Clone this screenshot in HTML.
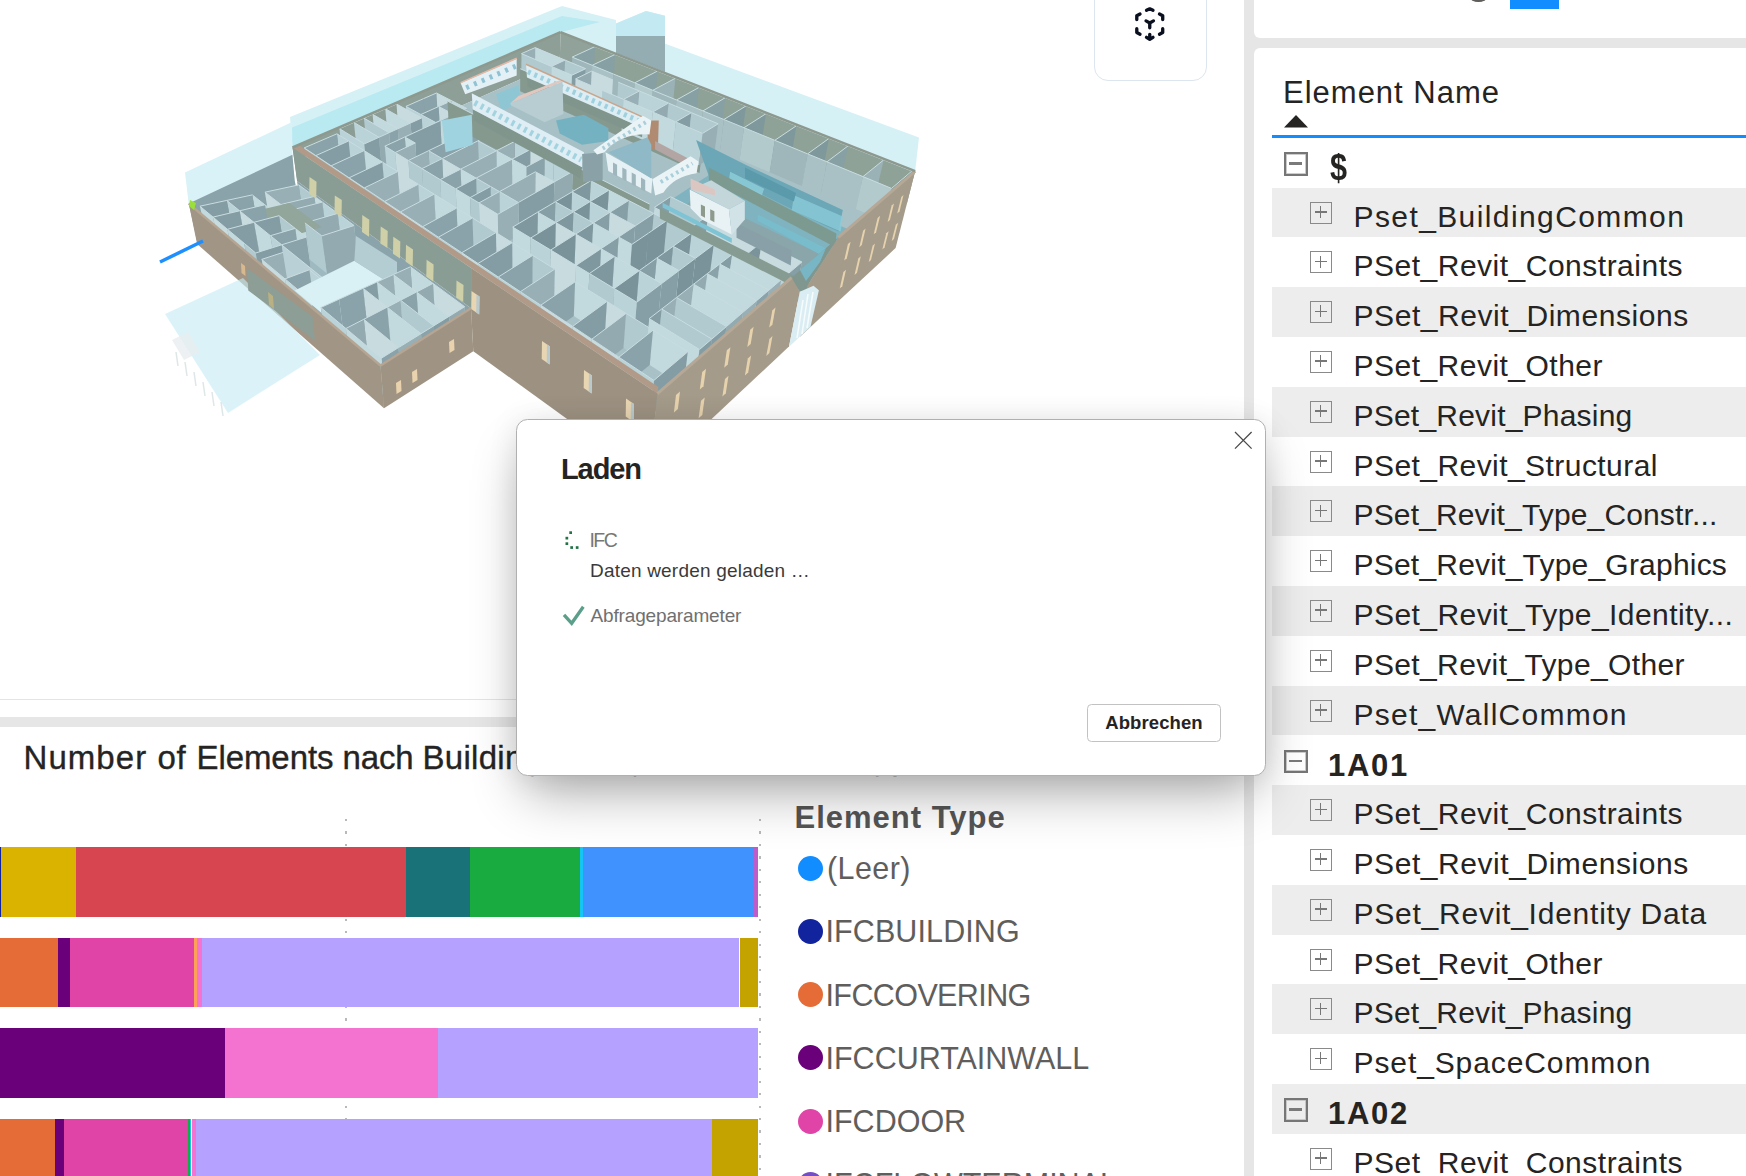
<!DOCTYPE html>
<html lang="de">
<head>
<meta charset="utf-8">
<title>IFC Report</title>
<style>
*{box-sizing:border-box;margin:0;padding:0}
html,body{width:1746px;height:1176px;overflow:hidden;background:#e6e6e6;font-family:"Liberation Sans",sans-serif}
.abs{position:absolute}
#viewer{left:0;top:0;width:1243.6px;height:717px;background:#fff;overflow:hidden}
#viewline{left:0;top:698.8px;width:1243.6px;height:1.4px;background:#dde6f0}
#iconbox{left:1094px;top:-14px;width:113px;height:95px;border:1.8px solid #dde5ee;border-radius:14px;background:#fff}
#chart{left:0;top:727.300px;width:1243.6px;height:449px;background:#fff;overflow:hidden}
#ctitle{left:23.500px;top:12px;font-size:33px;color:#252423;white-space:nowrap;letter-spacing:.77px;-webkit-text-stroke:.35px #252423}
.bar{position:absolute;left:0;height:69.4px}
.bar i{position:absolute;top:0;height:100%}
.grid{position:absolute;top:91.400px;width:2.2px;height:380px;background:repeating-linear-gradient(to bottom,#b9b9b9 0,#b9b9b9 2.2px,transparent 2.2px,transparent 12.46px)}
#legtitle{left:794.5px;top:72.500px;font-size:31px;font-weight:bold;color:#555;white-space:nowrap;letter-spacing:1px}
.leg{position:absolute;left:798px;height:24px;white-space:nowrap;font-size:30.5px;color:#605e5c;line-height:24px}
.leg b{position:absolute;left:0;top:-.5px;width:25px;height:25px;border-radius:50%}
.leg span{position:absolute;left:27.5px;top:0}
#rtop{left:1254px;top:-10px;width:500px;height:48px;background:#fff;border-radius:6px}
#rpanel{left:1254px;top:48px;width:500px;height:1140px;background:#fff;border-radius:6px;overflow:hidden}
#rhead{left:29px;top:27px;font-size:31px;color:#252423;white-space:nowrap;letter-spacing:1px}
#rline{left:18px;top:87px;width:490px;height:2.5px;background:#118dff}
.row{position:absolute;left:18px;width:490px;height:49.9px;white-space:nowrap;font-size:30px;color:#252423}
.row.g{background:#ededed}
.row .t{position:absolute;left:81.5px;top:11px;line-height:36px}
.row.h .t{left:56px;font-weight:bold;font-size:31px;letter-spacing:1.7px;top:12.5px}
.pm{position:absolute;left:38px;top:14px;width:22px;height:22px;border:1.5px solid #8a8a8a}
.pm:before{content:"";position:absolute;left:3.5px;top:8.6px;width:12px;height:1.6px;background:#777}
.pm:after{content:"";position:absolute;left:8.7px;top:3.4px;width:1.6px;height:12px;background:#777}
.row.h .pm{left:12px;top:14.5px;width:23.5px;height:23.5px;border:2.2px solid #767676;box-shadow:inset 0 0 0 .8px #bdbdbd}
.row.h .pm:before{left:3px;top:7.800px;width:13px;height:2.8px;background:#7a7a7a}
.row.h .pm:after{display:none}
#dlg{left:516px;top:419px;width:750px;height:356.5px;background:#fff;border:1.2px solid #b0b0b0;border-radius:11.5px;box-shadow:0 26px 54px -10px rgba(0,0,0,.33),0 2px 30px rgba(0,0,0,.09)}
#dlg .ti{left:44px;top:33px;font-size:29px;font-weight:bold;color:#252423;letter-spacing:-1.1px}
#dlg .l1{left:72.500px;top:109px;font-size:19.5px;color:#777;letter-spacing:-1.6px}
#dlg .l2{left:73px;top:140px;font-size:19px;color:#3b3a39;letter-spacing:.2px}
#dlg .l3{left:73.500px;top:185px;font-size:19px;color:#707070;letter-spacing:-.15px}
#btn{left:570px;top:284px;width:134px;height:38px;border:1.2px solid #c2c2c2;border-radius:4.5px;font-size:18.500px;font-weight:bold;color:#252423;text-align:center;line-height:35px;letter-spacing:.1px}
</style>
</head>
<body>
<div id="viewer" class="abs">
<svg class="abs" style="left:0;top:0;filter:blur(0.6px)" width="1244" height="717" viewBox="0 0 1244 717">
<polygon points="290.0,117.0 562.0,6.0 616.0,20.0 616.0,23.6 646.0,11.0 665.0,15.7 664.7,43.5 919.0,137.5 915.2,171.1 560.5,32.2 292.5,147.5" fill="#d6f1f6"/>
<polygon points="291.0,128.0 562.0,16.0 600.0,22.0 560.5,32.2 292.5,147.5" fill="#b9e9f1"/>
<polygon points="616.0,36.0 665.0,36.0 665.0,72.0 616.0,53.0" fill="#93adb3"/>
<polygon points="616.0,23.6 646.0,11.0 665.0,15.7 665.0,36.0 616.0,36.0" fill="#c3eaf2"/>
<polygon points="185.0,172.5 292.0,122.0 292.5,157.0 188.8,204.5" fill="#d8f2f7"/>
<polygon points="188.8,203.6 292.4,154.8 294.8,181.0 302.0,215.2 197.1,241.6" fill="#8aa2a9"/>
<polygon points="297.0,181.0 471.0,308.3 472.4,349.2 302.0,215.2" fill="#8ba3aa"/>
<polygon points="197.1,241.6 302.0,215.2 472.4,349.2 384.7,406.4" fill="#9fb9c0"/>
<polygon points="298.7,184.9 314.4,196.4 319.1,231.5 303.7,219.4" fill="#b0cad0"/>
<line x1="298.7" y1="184.9" x2="314.4" y2="196.4" stroke="#c9dde1" stroke-width="1"/>
<polygon points="314.4,196.4 322.3,202.1 326.9,237.6 319.1,231.5" fill="#c8dce0"/>
<line x1="314.4" y1="196.4" x2="322.3" y2="202.1" stroke="#c9dde1" stroke-width="1"/>
<polygon points="264.9,192.2 298.7,184.9 303.7,219.4 270.8,228.0" fill="#98afb5"/>
<line x1="264.9" y1="192.2" x2="298.7" y2="184.9" stroke="#c9dde1" stroke-width="1"/>
<polygon points="322.3,202.1 337.7,213.4 342.0,249.6 326.9,237.6" fill="#bad3d8"/>
<line x1="322.3" y1="202.1" x2="337.7" y2="213.4" stroke="#c9dde1" stroke-width="1"/>
<polygon points="280.9,204.5 314.4,196.4 319.1,231.5 286.7,240.8" fill="#92aab0"/>
<line x1="280.9" y1="204.5" x2="314.4" y2="196.4" stroke="#c9dde1" stroke-width="1"/>
<polygon points="337.7,213.4 354.1,225.5 358.2,262.3 342.0,249.6" fill="#bad3d8"/>
<line x1="337.7" y1="213.4" x2="354.1" y2="225.5" stroke="#c9dde1" stroke-width="1"/>
<polygon points="289.0,210.7 322.3,202.1 326.9,237.6 294.6,247.3" fill="#92aab0"/>
<line x1="289.0" y1="210.7" x2="322.3" y2="202.1" stroke="#c9dde1" stroke-width="1"/>
<polygon points="264.9,192.2 280.9,204.5 286.7,240.8 270.8,228.0" fill="#c8dce0"/>
<line x1="264.9" y1="192.2" x2="280.9" y2="204.5" stroke="#c9dde1" stroke-width="1"/>
<polygon points="304.9,222.9 337.7,213.4 342.0,249.6 310.2,260.0" fill="#92aab0"/>
<line x1="304.9" y1="222.9" x2="337.7" y2="213.4" stroke="#c9dde1" stroke-width="1"/>
<polygon points="280.9,204.5 289.0,210.7 294.6,247.3 286.7,240.8" fill="#c8dce0"/>
<line x1="280.9" y1="204.5" x2="289.0" y2="210.7" stroke="#c9dde1" stroke-width="1"/>
<polygon points="252.3,194.9 264.9,204.8 271.1,241.4 258.7,231.2" fill="#c2d9dd"/>
<line x1="252.3" y1="194.9" x2="264.9" y2="204.8" stroke="#c9dde1" stroke-width="1"/>
<polygon points="321.8,235.9 354.1,225.5 358.2,262.3 326.9,273.5" fill="#92aab0"/>
<line x1="321.8" y1="235.9" x2="354.1" y2="225.5" stroke="#c9dde1" stroke-width="1"/>
<polygon points="289.0,210.7 304.9,222.9 310.2,260.0 294.6,247.3" fill="#c2d9dd"/>
<line x1="289.0" y1="210.7" x2="304.9" y2="222.9" stroke="#c9dde1" stroke-width="1"/>
<polygon points="226.8,200.4 252.3,194.9 258.7,231.2 233.9,237.5" fill="#8aa2a9"/>
<line x1="226.8" y1="200.4" x2="252.3" y2="194.9" stroke="#c9dde1" stroke-width="1"/>
<polygon points="264.9,204.8 279.0,215.7 284.9,252.8 271.1,241.4" fill="#bad3d8"/>
<line x1="264.9" y1="204.8" x2="279.0" y2="215.7" stroke="#c9dde1" stroke-width="1"/>
<polygon points="242.2,214.2 275.4,241.1 321.6,227.3 289.5,202.9" fill="#93a69b"/>
<line x1="242.2" y1="214.2" x2="275.4" y2="241.1" stroke="#c9dde1" stroke-width="1"/>
<polygon points="304.9,222.9 321.8,235.9 326.9,273.5 310.2,260.0" fill="#b0cad0"/>
<line x1="304.9" y1="222.9" x2="321.8" y2="235.9" stroke="#c9dde1" stroke-width="1"/>
<polygon points="239.6,210.8 264.9,204.8 271.1,241.4 246.5,248.2" fill="#8aa2a9"/>
<line x1="239.6" y1="210.8" x2="264.9" y2="204.8" stroke="#c9dde1" stroke-width="1"/>
<polygon points="279.0,215.7 295.2,228.4 300.9,265.9 284.9,252.8" fill="#b0cad0"/>
<line x1="279.0" y1="215.7" x2="295.2" y2="228.4" stroke="#c9dde1" stroke-width="1"/>
<polygon points="226.8,200.4 239.6,210.8 246.5,248.2 233.9,237.5" fill="#bad3d8"/>
<line x1="226.8" y1="200.4" x2="239.6" y2="210.8" stroke="#c9dde1" stroke-width="1"/>
<polygon points="253.9,222.3 279.0,215.7 284.9,252.8 260.6,260.1" fill="#849da4"/>
<line x1="253.9" y1="222.3" x2="279.0" y2="215.7" stroke="#c9dde1" stroke-width="1"/>
<polygon points="295.2,228.4 306.3,237.1 311.8,274.9 300.9,265.9" fill="#c2d9dd"/>
<line x1="295.2" y1="228.4" x2="306.3" y2="237.1" stroke="#c9dde1" stroke-width="1"/>
<polygon points="199.9,206.2 226.8,200.4 233.9,237.5 208.0,244.1" fill="#849da4"/>
<line x1="199.9" y1="206.2" x2="226.8" y2="200.4" stroke="#c9dde1" stroke-width="1"/>
<polygon points="239.6,210.8 253.9,222.3 260.6,260.1 246.5,248.2" fill="#c8dce0"/>
<line x1="239.6" y1="210.8" x2="253.9" y2="222.3" stroke="#c9dde1" stroke-width="1"/>
<polygon points="270.4,235.7 295.2,228.4 300.9,265.9 276.8,273.8" fill="#8aa2a9"/>
<line x1="270.4" y1="235.7" x2="295.2" y2="228.4" stroke="#c9dde1" stroke-width="1"/>
<polygon points="213.0,217.1 239.6,210.8 246.5,248.2 220.8,255.3" fill="#849da4"/>
<line x1="213.0" y1="217.1" x2="239.6" y2="210.8" stroke="#c9dde1" stroke-width="1"/>
<polygon points="281.7,244.8 306.3,237.1 311.8,274.9 287.9,283.2" fill="#8aa2a9"/>
<line x1="281.7" y1="244.8" x2="306.3" y2="237.1" stroke="#c9dde1" stroke-width="1"/>
<polygon points="253.9,222.3 270.4,235.7 276.8,273.8 260.6,260.1" fill="#c2d9dd"/>
<line x1="253.9" y1="222.3" x2="270.4" y2="235.7" stroke="#c9dde1" stroke-width="1"/>
<polygon points="199.9,206.2 213.0,217.1 220.8,255.3 208.0,244.1" fill="#c2d9dd"/>
<line x1="199.9" y1="206.2" x2="213.0" y2="217.1" stroke="#c9dde1" stroke-width="1"/>
<polygon points="227.4,229.3 253.9,222.3 260.6,260.1 235.0,267.7" fill="#849da4"/>
<line x1="227.4" y1="229.3" x2="253.9" y2="222.3" stroke="#c9dde1" stroke-width="1"/>
<polygon points="270.4,235.7 281.7,244.8 287.9,283.2 276.8,273.8" fill="#bad3d8"/>
<line x1="270.4" y1="235.7" x2="281.7" y2="244.8" stroke="#c9dde1" stroke-width="1"/>
<polygon points="213.0,217.1 227.4,229.3 235.0,267.7 220.8,255.3" fill="#c8dce0"/>
<line x1="213.0" y1="217.1" x2="227.4" y2="229.3" stroke="#c9dde1" stroke-width="1"/>
<polygon points="227.4,229.3 244.2,243.3 251.4,282.0 235.0,267.7" fill="#c2d9dd"/>
<line x1="227.4" y1="229.3" x2="244.2" y2="243.3" stroke="#c9dde1" stroke-width="1"/>
<polygon points="255.7,253.0 281.7,244.8 287.9,283.2 262.7,291.9" fill="#849da4"/>
<line x1="255.7" y1="253.0" x2="281.7" y2="244.8" stroke="#c9dde1" stroke-width="1"/>
<polygon points="286.4,251.3 309.3,269.8 315.0,308.9 292.6,289.9" fill="#b0cad0"/>
<line x1="286.4" y1="251.3" x2="309.3" y2="269.8" stroke="#c9dde1" stroke-width="1"/>
<polygon points="261.7,259.4 286.4,251.3 292.6,289.9 268.7,298.5" fill="#98afb5"/>
<line x1="261.7" y1="259.4" x2="286.4" y2="251.3" stroke="#c9dde1" stroke-width="1"/>
<polygon points="281.6,244.8 345.4,296.3 350.2,336.0 287.8,283.2" fill="#b9d1d6"/>
<line x1="281.6" y1="244.8" x2="345.4" y2="296.3" stroke="#c9dde1" stroke-width="1"/>
<polygon points="244.2,243.3 255.7,253.0 262.7,291.9 251.4,282.0" fill="#b0cad0"/>
<line x1="244.2" y1="243.3" x2="255.7" y2="253.0" stroke="#c9dde1" stroke-width="1"/>
<polygon points="309.3,269.8 335.3,290.9 340.4,330.4 315.0,308.9" fill="#bad3d8"/>
<line x1="309.3" y1="269.8" x2="335.3" y2="290.9" stroke="#c9dde1" stroke-width="1"/>
<polygon points="285.0,278.9 309.3,269.8 315.0,308.9 291.5,318.4" fill="#8aa2a9"/>
<line x1="285.0" y1="278.9" x2="309.3" y2="269.8" stroke="#c9dde1" stroke-width="1"/>
<polygon points="261.7,259.4 285.0,278.9 291.5,318.4 268.7,298.5" fill="#c8dce0"/>
<line x1="261.7" y1="259.4" x2="285.0" y2="278.9" stroke="#c9dde1" stroke-width="1"/>
<polygon points="311.6,301.2 335.3,290.9 340.4,330.4 317.4,341.0" fill="#92aab0"/>
<line x1="311.6" y1="301.2" x2="335.3" y2="290.9" stroke="#c9dde1" stroke-width="1"/>
<polygon points="285.0,278.9 311.6,301.2 317.4,341.0 291.5,318.4" fill="#c2d9dd"/>
<line x1="285.0" y1="278.9" x2="311.6" y2="301.2" stroke="#c9dde1" stroke-width="1"/>
<polygon points="294.8,290.5 354.3,260.7 397.0,288.0 340.0,328.6" fill="#d9f1f5"/>
<polygon points="354.3,260.7 397.0,288.0 397.0,262.0 356.0,236.0" fill="#b4cdd3"/>
<polygon points="410.4,266.8 433.0,283.4 435.4,323.1 413.3,305.7" fill="#c2d9dd"/>
<line x1="410.4" y1="266.8" x2="433.0" y2="283.4" stroke="#c9dde1" stroke-width="1"/>
<polygon points="393.3,274.6 410.4,266.8 413.3,305.7 396.7,313.7" fill="#98afb5"/>
<line x1="393.3" y1="274.6" x2="410.4" y2="266.8" stroke="#c9dde1" stroke-width="1"/>
<polygon points="433.0,283.4 464.7,306.7 466.3,347.4 435.4,323.1" fill="#c8dce0"/>
<line x1="433.0" y1="283.4" x2="464.7" y2="306.7" stroke="#c9dde1" stroke-width="1"/>
<polygon points="416.5,292.0 433.0,283.4 435.4,323.1 419.4,331.8" fill="#92aab0"/>
<line x1="416.5" y1="292.0" x2="433.0" y2="283.4" stroke="#c9dde1" stroke-width="1"/>
<polygon points="393.3,274.6 416.5,292.0 419.4,331.8 396.7,313.7" fill="#c2d9dd"/>
<line x1="393.3" y1="274.6" x2="416.5" y2="292.0" stroke="#c9dde1" stroke-width="1"/>
<polygon points="376.9,282.0 393.3,274.6 396.7,313.7 380.9,321.3" fill="#98afb5"/>
<line x1="376.9" y1="282.0" x2="393.3" y2="274.6" stroke="#c9dde1" stroke-width="1"/>
<polygon points="449.0,316.4 464.7,306.7 466.3,347.4 451.0,357.2" fill="#92aab0"/>
<line x1="449.0" y1="316.4" x2="464.7" y2="306.7" stroke="#c9dde1" stroke-width="1"/>
<polygon points="416.5,292.0 449.0,316.4 451.0,357.2 419.4,331.8" fill="#c2d9dd"/>
<line x1="416.5" y1="292.0" x2="449.0" y2="316.4" stroke="#c9dde1" stroke-width="1"/>
<polygon points="400.6,300.2 416.5,292.0 419.4,331.8 403.9,340.2" fill="#8aa2a9"/>
<line x1="400.6" y1="300.2" x2="416.5" y2="292.0" stroke="#c9dde1" stroke-width="1"/>
<polygon points="376.9,282.0 400.6,300.2 403.9,340.2 380.9,321.3" fill="#c2d9dd"/>
<line x1="376.9" y1="282.0" x2="400.6" y2="300.2" stroke="#c9dde1" stroke-width="1"/>
<polygon points="363.1,288.3 376.9,282.0 380.9,321.3 367.5,327.7" fill="#849da4"/>
<line x1="363.1" y1="288.3" x2="376.9" y2="282.0" stroke="#c9dde1" stroke-width="1"/>
<polygon points="433.8,325.8 449.0,316.4 451.0,357.2 436.3,366.6" fill="#849da4"/>
<line x1="433.8" y1="325.8" x2="449.0" y2="316.4" stroke="#c9dde1" stroke-width="1"/>
<polygon points="387.2,307.2 400.6,300.2 403.9,340.2 390.9,347.2" fill="#98afb5"/>
<line x1="387.2" y1="307.2" x2="400.6" y2="300.2" stroke="#c9dde1" stroke-width="1"/>
<polygon points="400.6,300.2 433.8,325.8 436.3,366.6 403.9,340.2" fill="#b0cad0"/>
<line x1="400.6" y1="300.2" x2="433.8" y2="325.8" stroke="#c9dde1" stroke-width="1"/>
<polygon points="363.1,288.3 387.2,307.2 390.9,347.2 367.5,327.7" fill="#c8dce0"/>
<line x1="363.1" y1="288.3" x2="387.2" y2="307.2" stroke="#c9dde1" stroke-width="1"/>
<polygon points="339.1,299.2 363.1,288.3 367.5,327.7 344.2,338.9" fill="#8aa2a9"/>
<line x1="339.1" y1="299.2" x2="363.1" y2="288.3" stroke="#c9dde1" stroke-width="1"/>
<polygon points="387.2,307.2 421.0,333.7 423.9,374.5 390.9,347.2" fill="#c2d9dd"/>
<line x1="387.2" y1="307.2" x2="421.0" y2="333.7" stroke="#c9dde1" stroke-width="1"/>
<polygon points="421.0,333.7 433.8,325.8 436.3,366.6 423.9,374.5" fill="#8aa2a9"/>
<line x1="421.0" y1="333.7" x2="433.8" y2="325.8" stroke="#c9dde1" stroke-width="1"/>
<polygon points="363.8,319.3 387.2,307.2 390.9,347.2 368.2,359.5" fill="#8aa2a9"/>
<line x1="363.8" y1="319.3" x2="387.2" y2="307.2" stroke="#c9dde1" stroke-width="1"/>
<polygon points="320.8,307.5 339.1,299.2 344.2,338.9 326.5,347.4" fill="#8aa2a9"/>
<line x1="320.8" y1="307.5" x2="339.1" y2="299.2" stroke="#c9dde1" stroke-width="1"/>
<polygon points="398.5,347.6 421.0,333.7 423.9,374.5 402.1,388.4" fill="#98afb5"/>
<line x1="398.5" y1="347.6" x2="421.0" y2="333.7" stroke="#c9dde1" stroke-width="1"/>
<polygon points="363.8,319.3 398.5,347.6 402.1,388.4 368.2,359.5" fill="#c8dce0"/>
<line x1="363.8" y1="319.3" x2="398.5" y2="347.6" stroke="#c9dde1" stroke-width="1"/>
<polygon points="345.9,328.5 363.8,319.3 368.2,359.5 351.0,368.8" fill="#92aab0"/>
<line x1="345.9" y1="328.5" x2="363.8" y2="319.3" stroke="#c9dde1" stroke-width="1"/>
<polygon points="320.8,307.5 345.9,328.5 351.0,368.8 326.5,347.4" fill="#bad3d8"/>
<line x1="320.8" y1="307.5" x2="345.9" y2="328.5" stroke="#c9dde1" stroke-width="1"/>
<polygon points="381.4,358.2 398.5,347.6 402.1,388.4 385.6,399.0" fill="#8aa2a9"/>
<line x1="381.4" y1="358.2" x2="398.5" y2="347.6" stroke="#c9dde1" stroke-width="1"/>
<polygon points="345.9,328.5 381.4,358.2 385.6,399.0 351.0,368.8" fill="#c2d9dd"/>
<line x1="345.9" y1="328.5" x2="381.4" y2="358.2" stroke="#c9dde1" stroke-width="1"/>
<polygon points="292.5,147.5 560.5,32.2 559.8,61.6 297.1,179.4" fill="#8e9f97"/>
<polygon points="560.5,32.2 915.2,171.1 906.9,203.4 559.8,61.6" fill="#90a299"/>
<polygon points="297.1,179.4 559.8,61.6 906.9,203.4 653.7,429.1" fill="#a8c1c7"/>
<polygon points="595.0,46.6 615.0,54.5 613.3,84.5 593.7,76.4" fill="#8ea298"/>
<line x1="595.0" y1="46.6" x2="615.0" y2="54.5" stroke="#c9dde1" stroke-width="1"/>
<polygon points="572.2,57.1 595.0,46.6 593.7,76.4 571.3,87.2" fill="#86a0a4"/>
<line x1="572.2" y1="57.1" x2="595.0" y2="46.6" stroke="#c9dde1" stroke-width="1"/>
<polygon points="521.5,53.6 535.2,47.6 534.9,77.4 521.4,83.5" fill="#98afb5"/>
<line x1="521.5" y1="53.6" x2="535.2" y2="47.6" stroke="#c9dde1" stroke-width="1"/>
<polygon points="535.2,47.6 565.1,60.1 564.3,90.2 534.9,77.4" fill="#c2d9dd"/>
<line x1="535.2" y1="47.6" x2="565.1" y2="60.1" stroke="#c9dde1" stroke-width="1"/>
<polygon points="459.1,122.0 651.6,221.5 712.3,181.2 520.6,93.6" fill="#a6c0c6"/>
<line x1="459.1" y1="122.0" x2="651.6" y2="221.5" stroke="#c9dde1" stroke-width="1"/>
<polygon points="615.0,54.5 636.0,62.7 633.9,92.9 613.3,84.5" fill="#8ea298"/>
<line x1="615.0" y1="54.5" x2="636.0" y2="62.7" stroke="#c9dde1" stroke-width="1"/>
<polygon points="592.2,65.3 615.0,54.5 613.3,84.5 590.9,95.6" fill="#86a0a4"/>
<line x1="592.2" y1="65.3" x2="615.0" y2="54.5" stroke="#c9dde1" stroke-width="1"/>
<polygon points="521.5,53.6 551.4,66.4 550.8,96.7 521.4,83.5" fill="#b0cad0"/>
<line x1="521.5" y1="53.6" x2="551.4" y2="66.4" stroke="#c9dde1" stroke-width="1"/>
<polygon points="572.2,57.1 592.2,65.3 590.9,95.6 571.3,87.2" fill="#9fb7ba"/>
<line x1="572.2" y1="57.1" x2="592.2" y2="65.3" stroke="#c9dde1" stroke-width="1"/>
<polygon points="551.4,66.4 565.1,60.1 564.3,90.2 550.8,96.7" fill="#92aab0"/>
<line x1="551.4" y1="66.4" x2="565.1" y2="60.1" stroke="#c9dde1" stroke-width="1"/>
<polygon points="565.1,60.1 585.7,68.7 584.5,99.0 564.3,90.2" fill="#b0cad0"/>
<line x1="565.1" y1="60.1" x2="585.7" y2="68.7" stroke="#c9dde1" stroke-width="1"/>
<polygon points="636.0,62.7 657.4,71.1 654.9,101.5 633.9,92.9" fill="#8ea298"/>
<line x1="636.0" y1="62.7" x2="657.4" y2="71.1" stroke="#c9dde1" stroke-width="1"/>
<polygon points="592.2,65.3 613.3,74.0 611.5,104.5 590.9,95.6" fill="#a9c1c4"/>
<line x1="592.2" y1="65.3" x2="613.3" y2="74.0" stroke="#c9dde1" stroke-width="1"/>
<polygon points="551.4,66.4 572.0,75.2 571.1,105.7 550.8,96.7" fill="#c2d9dd"/>
<line x1="551.4" y1="66.4" x2="572.0" y2="75.2" stroke="#c9dde1" stroke-width="1"/>
<polygon points="572.0,75.2 585.7,68.7 584.5,99.0 571.1,105.7" fill="#849da4"/>
<line x1="572.0" y1="75.2" x2="585.7" y2="68.7" stroke="#c9dde1" stroke-width="1"/>
<polygon points="657.4,71.1 675.4,78.2 672.5,108.8 654.9,101.5" fill="#8ea298"/>
<line x1="657.4" y1="71.1" x2="675.4" y2="78.2" stroke="#c9dde1" stroke-width="1"/>
<polygon points="575.6,78.9 591.7,71.1 590.3,101.5 574.6,109.5" fill="#92aab0"/>
<line x1="575.6" y1="78.9" x2="591.7" y2="71.1" stroke="#c9dde1" stroke-width="1"/>
<polygon points="634.8,82.8 657.4,71.1 654.9,101.5 632.6,113.5" fill="#86a0a4"/>
<line x1="634.8" y1="82.8" x2="657.4" y2="71.1" stroke="#c9dde1" stroke-width="1"/>
<polygon points="591.7,71.1 618.3,82.2 616.5,112.9 590.3,101.5" fill="#c8dce0"/>
<line x1="591.7" y1="71.1" x2="618.3" y2="82.2" stroke="#c9dde1" stroke-width="1"/>
<polygon points="613.3,74.0 634.8,82.8 632.6,113.5 611.5,104.5" fill="#9fb7ba"/>
<line x1="613.3" y1="74.0" x2="634.8" y2="82.8" stroke="#c9dde1" stroke-width="1"/>
<polygon points="675.4,78.2 699.0,87.4 695.6,118.2 672.5,108.8" fill="#8ea298"/>
<line x1="675.4" y1="78.2" x2="699.0" y2="87.4" stroke="#c9dde1" stroke-width="1"/>
<polygon points="652.8,90.3 675.4,78.2 672.5,108.8 650.3,121.1" fill="#9ab2b6"/>
<line x1="652.8" y1="90.3" x2="675.4" y2="78.2" stroke="#c9dde1" stroke-width="1"/>
<polygon points="575.6,78.9 602.3,90.3 600.8,121.2 574.6,109.5" fill="#c8dce0"/>
<line x1="575.6" y1="78.9" x2="602.3" y2="90.3" stroke="#c9dde1" stroke-width="1"/>
<polygon points="634.8,82.8 652.8,90.3 650.3,121.1 632.6,113.5" fill="#b3cacd"/>
<line x1="634.8" y1="82.8" x2="652.8" y2="90.3" stroke="#c9dde1" stroke-width="1"/>
<polygon points="618.3,82.2 639.4,91.0 637.2,121.9 616.5,112.9" fill="#b0cad0"/>
<line x1="618.3" y1="82.2" x2="639.4" y2="91.0" stroke="#c9dde1" stroke-width="1"/>
<polygon points="699.0,87.4 725.3,97.7 721.3,128.7 695.6,118.2" fill="#8ea298"/>
<line x1="699.0" y1="87.4" x2="725.3" y2="97.7" stroke="#c9dde1" stroke-width="1"/>
<polygon points="676.5,100.0 699.0,87.4 695.6,118.2 673.5,131.1" fill="#86a0a4"/>
<line x1="676.5" y1="100.0" x2="699.0" y2="87.4" stroke="#c9dde1" stroke-width="1"/>
<polygon points="652.8,90.3 676.5,100.0 673.5,131.1 650.3,121.1" fill="#9fb7ba"/>
<line x1="652.8" y1="90.3" x2="676.5" y2="100.0" stroke="#c9dde1" stroke-width="1"/>
<polygon points="623.5,99.4 639.4,91.0 637.2,121.9 621.5,130.5" fill="#98afb5"/>
<line x1="623.5" y1="99.4" x2="639.4" y2="91.0" stroke="#c9dde1" stroke-width="1"/>
<polygon points="602.3,90.3 623.5,99.4 621.5,130.5 600.8,121.2" fill="#b0cad0"/>
<line x1="602.3" y1="90.3" x2="623.5" y2="99.4" stroke="#c9dde1" stroke-width="1"/>
<polygon points="639.4,91.0 668.5,103.1 665.7,134.3 637.2,121.9" fill="#bad3d8"/>
<line x1="639.4" y1="91.0" x2="668.5" y2="103.1" stroke="#c9dde1" stroke-width="1"/>
<polygon points="725.3,97.7 746.1,105.9 741.7,137.1 721.3,128.7" fill="#8ea298"/>
<line x1="725.3" y1="97.7" x2="746.1" y2="105.9" stroke="#c9dde1" stroke-width="1"/>
<polygon points="520.2,68.7 702.3,148.9 699.5,172.9 520.2,91.3" fill="#85998f"/>
<line x1="520.2" y1="68.7" x2="702.3" y2="148.9" stroke="#c9dde1" stroke-width="1"/>
<polygon points="703.0,110.9 725.3,97.7 721.3,128.7 699.4,142.2" fill="#86a0a4"/>
<line x1="703.0" y1="110.9" x2="725.3" y2="97.7" stroke="#c9dde1" stroke-width="1"/>
<polygon points="423.6,98.6 436.5,93.0 438.1,123.9 425.4,129.6" fill="#8aa2a9"/>
<line x1="423.6" y1="98.6" x2="436.5" y2="93.0" stroke="#c9dde1" stroke-width="1"/>
<polygon points="436.5,93.0 451.6,100.7 452.9,131.8 438.1,123.9" fill="#c8dce0"/>
<line x1="436.5" y1="93.0" x2="451.6" y2="100.7" stroke="#c9dde1" stroke-width="1"/>
<polygon points="676.5,100.0 703.0,110.9 699.4,142.2 673.5,131.1" fill="#a9c1c4"/>
<line x1="676.5" y1="100.0" x2="703.0" y2="110.9" stroke="#c9dde1" stroke-width="1"/>
<polygon points="669.2,201.0 819.4,274.7 863.2,236.0 715.9,170.4" fill="#7fb3bf"/>
<line x1="669.2" y1="201.0" x2="819.4" y2="274.7" stroke="#c9dde1" stroke-width="1"/>
<polygon points="623.5,99.4 652.7,112.0 650.1,143.3 621.5,130.5" fill="#c2d9dd"/>
<line x1="623.5" y1="99.4" x2="652.7" y2="112.0" stroke="#c9dde1" stroke-width="1"/>
<polygon points="746.1,105.9 766.0,113.7 761.2,145.1 741.7,137.1" fill="#8ea298"/>
<line x1="746.1" y1="105.9" x2="766.0" y2="113.7" stroke="#c9dde1" stroke-width="1"/>
<polygon points="668.5,103.1 691.4,112.7 688.1,144.0 665.7,134.3" fill="#b0cad0"/>
<line x1="668.5" y1="103.1" x2="691.4" y2="112.7" stroke="#c9dde1" stroke-width="1"/>
<polygon points="652.7,112.0 668.5,103.1 665.7,134.3 650.1,143.3" fill="#92aab0"/>
<line x1="652.7" y1="112.0" x2="668.5" y2="103.1" stroke="#c9dde1" stroke-width="1"/>
<polygon points="723.9,119.5 746.1,105.9 741.7,137.1 719.9,150.9" fill="#7f989c"/>
<line x1="723.9" y1="119.5" x2="746.1" y2="105.9" stroke="#c9dde1" stroke-width="1"/>
<polygon points="405.9,106.4 423.6,98.6 425.4,129.6 408.1,137.5" fill="#8aa2a9"/>
<line x1="405.9" y1="106.4" x2="423.6" y2="98.6" stroke="#c9dde1" stroke-width="1"/>
<polygon points="438.7,106.5 451.6,100.7 452.9,131.8 440.3,137.7" fill="#92aab0"/>
<line x1="438.7" y1="106.5" x2="451.6" y2="100.7" stroke="#c9dde1" stroke-width="1"/>
<polygon points="451.6,100.7 466.7,108.4 467.7,139.6 452.9,131.8" fill="#c2d9dd"/>
<line x1="451.6" y1="100.7" x2="466.7" y2="108.4" stroke="#c9dde1" stroke-width="1"/>
<polygon points="703.0,110.9 723.9,119.5 719.9,150.9 699.4,142.2" fill="#a9c1c4"/>
<line x1="703.0" y1="110.9" x2="723.9" y2="119.5" stroke="#c9dde1" stroke-width="1"/>
<polygon points="385.3,108.8 396.5,104.0 398.8,135.1 387.9,140.0" fill="#8c9d95"/>
<line x1="385.3" y1="108.8" x2="396.5" y2="104.0" stroke="#c9dde1" stroke-width="1"/>
<polygon points="766.0,113.7 796.5,125.7 791.0,157.2 761.2,145.1" fill="#8ea298"/>
<line x1="766.0" y1="113.7" x2="796.5" y2="125.7" stroke="#c9dde1" stroke-width="1"/>
<polygon points="675.7,121.9 691.4,112.7 688.1,144.0 672.6,153.4" fill="#849da4"/>
<line x1="675.7" y1="121.9" x2="691.4" y2="112.7" stroke="#c9dde1" stroke-width="1"/>
<polygon points="691.4,112.7 718.2,123.8 714.3,155.4 688.1,144.0" fill="#b0cad0"/>
<line x1="691.4" y1="112.7" x2="718.2" y2="123.8" stroke="#c9dde1" stroke-width="1"/>
<polygon points="652.7,112.0 675.7,121.9 672.6,153.4 650.1,143.3" fill="#c2d9dd"/>
<line x1="652.7" y1="112.0" x2="675.7" y2="121.9" stroke="#c9dde1" stroke-width="1"/>
<polygon points="744.0,127.7 766.0,113.7 761.2,145.1 739.6,159.4" fill="#7f989c"/>
<line x1="744.0" y1="127.7" x2="766.0" y2="113.7" stroke="#c9dde1" stroke-width="1"/>
<polygon points="438.7,106.5 453.7,114.4 455.0,145.8 440.3,137.7" fill="#c8dce0"/>
<line x1="438.7" y1="106.5" x2="453.7" y2="114.4" stroke="#c9dde1" stroke-width="1"/>
<polygon points="453.7,114.4 466.7,108.4 467.7,139.6 455.0,145.8" fill="#98afb5"/>
<line x1="453.7" y1="114.4" x2="466.7" y2="108.4" stroke="#c9dde1" stroke-width="1"/>
<polygon points="420.9,114.5 438.7,106.5 440.3,137.7 422.8,145.9" fill="#849da4"/>
<line x1="420.9" y1="114.5" x2="438.7" y2="106.5" stroke="#c9dde1" stroke-width="1"/>
<polygon points="405.9,106.4 420.9,114.5 422.8,145.9 408.1,137.5" fill="#bad3d8"/>
<line x1="405.9" y1="106.4" x2="420.9" y2="114.5" stroke="#c9dde1" stroke-width="1"/>
<polygon points="396.5,104.0 421.8,117.9 423.8,149.3 398.8,135.1" fill="#c8dce0"/>
<line x1="396.5" y1="104.0" x2="421.8" y2="117.9" stroke="#c9dde1" stroke-width="1"/>
<polygon points="723.9,119.5 744.0,127.7 739.6,159.4 719.9,150.9" fill="#a9c1c4"/>
<line x1="723.9" y1="119.5" x2="744.0" y2="127.7" stroke="#c9dde1" stroke-width="1"/>
<polygon points="372.6,114.3 385.3,108.8 387.9,140.0 375.4,145.7" fill="#8c9d95"/>
<line x1="372.6" y1="114.3" x2="385.3" y2="108.8" stroke="#c9dde1" stroke-width="1"/>
<polygon points="458.4,112.2 469.0,117.7 470.0,149.1 459.6,143.5" fill="#b0cad0"/>
<line x1="458.4" y1="112.2" x2="469.0" y2="117.7" stroke="#c9dde1" stroke-width="1"/>
<polygon points="440.3,120.6 458.4,112.2 459.6,143.5 441.9,152.1" fill="#8aa2a9"/>
<line x1="440.3" y1="120.6" x2="458.4" y2="112.2" stroke="#c9dde1" stroke-width="1"/>
<polygon points="385.3,108.8 410.6,123.0 412.8,154.5 387.9,140.0" fill="#c2d9dd"/>
<line x1="385.3" y1="108.8" x2="410.6" y2="123.0" stroke="#c9dde1" stroke-width="1"/>
<polygon points="435.9,122.6 453.7,114.4 455.0,145.8 437.5,154.2" fill="#98afb5"/>
<line x1="435.9" y1="122.6" x2="453.7" y2="114.4" stroke="#c9dde1" stroke-width="1"/>
<polygon points="363.9,118.1 372.6,114.3 375.4,145.7 367.0,149.5" fill="#8c9d95"/>
<line x1="363.9" y1="118.1" x2="372.6" y2="114.3" stroke="#c9dde1" stroke-width="1"/>
<polygon points="420.9,114.5 435.9,122.6 437.5,154.2 422.8,145.9" fill="#bad3d8"/>
<line x1="420.9" y1="114.5" x2="435.9" y2="122.6" stroke="#c9dde1" stroke-width="1"/>
<polygon points="675.7,121.9 702.6,133.4 698.9,165.2 672.6,153.4" fill="#bad3d8"/>
<line x1="675.7" y1="121.9" x2="702.6" y2="133.4" stroke="#c9dde1" stroke-width="1"/>
<polygon points="796.5,125.7 829.0,138.4 822.8,170.2 791.0,157.2" fill="#8ea298"/>
<line x1="796.5" y1="125.7" x2="829.0" y2="138.4" stroke="#c9dde1" stroke-width="1"/>
<polygon points="702.6,133.4 718.2,123.8 714.3,155.4 698.9,165.2" fill="#98afb5"/>
<line x1="702.6" y1="133.4" x2="718.2" y2="123.8" stroke="#c9dde1" stroke-width="1"/>
<polygon points="469.0,117.7 482.5,124.7 483.2,156.3 470.0,149.1" fill="#bad3d8"/>
<line x1="469.0" y1="117.7" x2="482.5" y2="124.7" stroke="#c9dde1" stroke-width="1"/>
<polygon points="668.6,216.5 798.0,282.3 826.8,257.2 698.8,196.0" fill="#8aa6aa"/>
<line x1="668.6" y1="216.5" x2="798.0" y2="282.3" stroke="#c9dde1" stroke-width="1"/>
<polygon points="774.8,140.3 796.5,125.7 791.0,157.2 769.6,172.2" fill="#7f989c"/>
<line x1="774.8" y1="140.3" x2="796.5" y2="125.7" stroke="#c9dde1" stroke-width="1"/>
<polygon points="410.6,123.0 421.8,117.9 423.8,149.3 412.8,154.5" fill="#849da4"/>
<line x1="410.6" y1="123.0" x2="421.8" y2="117.9" stroke="#c9dde1" stroke-width="1"/>
<polygon points="450.9,126.3 469.0,117.7 470.0,149.1 452.2,157.9" fill="#849da4"/>
<line x1="450.9" y1="126.3" x2="469.0" y2="117.7" stroke="#c9dde1" stroke-width="1"/>
<polygon points="744.0,127.7 774.8,140.3 769.6,172.2 739.6,159.4" fill="#b3cacd"/>
<line x1="744.0" y1="127.7" x2="774.8" y2="140.3" stroke="#c9dde1" stroke-width="1"/>
<polygon points="353.9,122.4 363.9,118.1 367.0,149.5 357.2,153.8" fill="#8c9d95"/>
<line x1="353.9" y1="122.4" x2="363.9" y2="118.1" stroke="#c9dde1" stroke-width="1"/>
<polygon points="440.3,120.6 450.9,126.3 452.2,157.9 441.9,152.1" fill="#c2d9dd"/>
<line x1="440.3" y1="120.6" x2="450.9" y2="126.3" stroke="#c9dde1" stroke-width="1"/>
<polygon points="372.6,114.3 397.8,128.8 400.2,160.4 375.4,145.7" fill="#c2d9dd"/>
<line x1="372.6" y1="114.3" x2="397.8" y2="128.8" stroke="#c9dde1" stroke-width="1"/>
<polygon points="482.5,124.7 496.2,131.8 496.7,163.5 483.2,156.3" fill="#b0cad0"/>
<line x1="482.5" y1="124.7" x2="496.2" y2="131.8" stroke="#c9dde1" stroke-width="1"/>
<polygon points="397.8,128.8 410.6,123.0 412.8,154.5 400.2,160.4" fill="#98afb5"/>
<line x1="397.8" y1="128.8" x2="410.6" y2="123.0" stroke="#c9dde1" stroke-width="1"/>
<polygon points="363.9,118.1 389.1,132.7 391.7,164.4 367.0,149.5" fill="#b0cad0"/>
<line x1="363.9" y1="118.1" x2="389.1" y2="132.7" stroke="#c9dde1" stroke-width="1"/>
<polygon points="464.3,133.5 482.5,124.7 483.2,156.3 465.4,165.3" fill="#8aa2a9"/>
<line x1="464.3" y1="133.5" x2="482.5" y2="124.7" stroke="#c9dde1" stroke-width="1"/>
<polygon points="829.0,138.4 848.1,145.9 841.4,177.9 822.8,170.2" fill="#8ea298"/>
<line x1="829.0" y1="138.4" x2="848.1" y2="145.9" stroke="#c9dde1" stroke-width="1"/>
<polygon points="339.4,128.6 353.9,122.4 357.2,153.8 343.0,160.2" fill="#8c9d95"/>
<line x1="339.4" y1="128.6" x2="353.9" y2="122.4" stroke="#c9dde1" stroke-width="1"/>
<polygon points="450.9,126.3 464.3,133.5 465.4,165.3 452.2,157.9" fill="#c8dce0"/>
<line x1="450.9" y1="126.3" x2="464.3" y2="133.5" stroke="#c9dde1" stroke-width="1"/>
<polygon points="404.8,137.0 440.3,120.6 441.9,152.1 407.2,168.8" fill="#849da4"/>
<line x1="404.8" y1="137.0" x2="440.3" y2="120.6" stroke="#c9dde1" stroke-width="1"/>
<polygon points="353.9,122.4 379.0,137.3 381.8,169.1 357.2,153.8" fill="#bad3d8"/>
<line x1="353.9" y1="122.4" x2="379.0" y2="137.3" stroke="#c9dde1" stroke-width="1"/>
<polygon points="389.1,132.7 397.8,128.8 400.2,160.4 391.7,164.4" fill="#8aa2a9"/>
<line x1="389.1" y1="132.7" x2="397.8" y2="128.8" stroke="#c9dde1" stroke-width="1"/>
<polygon points="807.6,153.9 829.0,138.4 822.8,170.2 801.7,186.0" fill="#7f989c"/>
<line x1="807.6" y1="153.9" x2="829.0" y2="138.4" stroke="#c9dde1" stroke-width="1"/>
<polygon points="496.2,131.8 514.7,141.4 514.8,173.3 496.7,163.5" fill="#c8dce0"/>
<line x1="496.2" y1="131.8" x2="514.7" y2="141.4" stroke="#c9dde1" stroke-width="1"/>
<polygon points="774.8,140.3 807.6,153.9 801.7,186.0 769.6,172.2" fill="#9fb7ba"/>
<line x1="774.8" y1="140.3" x2="807.6" y2="153.9" stroke="#c9dde1" stroke-width="1"/>
<polygon points="478.0,140.8 496.2,131.8 496.7,163.5 478.8,172.8" fill="#92aab0"/>
<line x1="478.0" y1="140.8" x2="496.2" y2="131.8" stroke="#c9dde1" stroke-width="1"/>
<polygon points="447.6,101.1 649.7,204.1 647.6,228.8 448.6,124.2" fill="#85998f"/>
<line x1="447.6" y1="101.1" x2="649.7" y2="204.1" stroke="#c9dde1" stroke-width="1"/>
<polygon points="379.0,137.3 389.1,132.7 391.7,164.4 381.8,169.1" fill="#92aab0"/>
<line x1="379.0" y1="137.3" x2="389.1" y2="132.7" stroke="#c9dde1" stroke-width="1"/>
<polygon points="848.1,145.9 883.7,159.9 876.2,192.1 841.4,177.9" fill="#8ea298"/>
<line x1="848.1" y1="145.9" x2="883.7" y2="159.9" stroke="#c9dde1" stroke-width="1"/>
<polygon points="827.0,161.8 848.1,145.9 841.4,177.9 820.6,194.0" fill="#86a0a4"/>
<line x1="827.0" y1="161.8" x2="848.1" y2="145.9" stroke="#c9dde1" stroke-width="1"/>
<polygon points="339.4,128.6 364.3,143.9 367.5,175.8 343.0,160.2" fill="#bad3d8"/>
<line x1="339.4" y1="128.6" x2="364.3" y2="143.9" stroke="#c9dde1" stroke-width="1"/>
<polygon points="336.9,133.8 348.6,141.0 352.0,172.9 340.6,165.4" fill="#bad3d8"/>
<line x1="336.9" y1="133.8" x2="348.6" y2="141.0" stroke="#c9dde1" stroke-width="1"/>
<polygon points="404.8,137.0 415.3,143.0 417.4,175.0 407.2,168.8" fill="#c2d9dd"/>
<line x1="404.8" y1="137.0" x2="415.3" y2="143.0" stroke="#c9dde1" stroke-width="1"/>
<polygon points="428.6,150.7 464.3,133.5 465.4,165.3 430.5,182.8" fill="#8aa2a9"/>
<line x1="428.6" y1="150.7" x2="464.3" y2="133.5" stroke="#c9dde1" stroke-width="1"/>
<polygon points="514.7,141.4 530.3,149.5 530.1,181.6 514.8,173.3" fill="#bad3d8"/>
<line x1="514.7" y1="141.4" x2="530.3" y2="149.5" stroke="#c9dde1" stroke-width="1"/>
<polygon points="364.3,143.9 379.0,137.3 381.8,169.1 367.5,175.8" fill="#849da4"/>
<line x1="364.3" y1="143.9" x2="379.0" y2="137.3" stroke="#c9dde1" stroke-width="1"/>
<polygon points="384.8,146.2 404.8,137.0 407.2,168.8 387.5,178.2" fill="#8aa2a9"/>
<line x1="384.8" y1="146.2" x2="404.8" y2="137.0" stroke="#c9dde1" stroke-width="1"/>
<polygon points="496.4,150.8 514.7,141.4 514.8,173.3 496.9,182.9" fill="#98afb5"/>
<line x1="496.4" y1="150.8" x2="514.7" y2="141.4" stroke="#c9dde1" stroke-width="1"/>
<polygon points="807.6,153.9 827.0,161.8 820.6,194.0 801.7,186.0" fill="#a9c1c4"/>
<line x1="807.6" y1="153.9" x2="827.0" y2="161.8" stroke="#c9dde1" stroke-width="1"/>
<polygon points="478.0,140.8 496.4,150.8 496.9,182.9 478.8,172.8" fill="#b0cad0"/>
<line x1="478.0" y1="140.8" x2="496.4" y2="150.8" stroke="#c9dde1" stroke-width="1"/>
<polygon points="304.2,147.9 336.9,133.8 340.6,165.4 308.6,179.9" fill="#8aa2a9"/>
<line x1="304.2" y1="147.9" x2="336.9" y2="133.8" stroke="#c9dde1" stroke-width="1"/>
<polygon points="883.7,159.9 911.9,171.0 903.7,203.3 876.2,192.1" fill="#8ea298"/>
<line x1="883.7" y1="159.9" x2="911.9" y2="171.0" stroke="#c9dde1" stroke-width="1"/>
<polygon points="442.2,158.6 478.0,140.8 478.8,172.8 443.8,190.8" fill="#92aab0"/>
<line x1="442.2" y1="158.6" x2="478.0" y2="140.8" stroke="#c9dde1" stroke-width="1"/>
<polygon points="348.6,141.0 364.1,150.6 367.3,182.7 352.0,172.9" fill="#bad3d8"/>
<line x1="348.6" y1="141.0" x2="364.1" y2="150.6" stroke="#c9dde1" stroke-width="1"/>
<polygon points="395.2,152.5 415.3,143.0 417.4,175.0 397.7,184.6" fill="#98afb5"/>
<line x1="395.2" y1="152.5" x2="415.3" y2="143.0" stroke="#c9dde1" stroke-width="1"/>
<polygon points="530.3,149.5 544.8,157.0 544.3,189.2 530.1,181.6" fill="#c8dce0"/>
<line x1="530.3" y1="149.5" x2="544.8" y2="157.0" stroke="#c9dde1" stroke-width="1"/>
<polygon points="512.0,159.2 530.3,149.5 530.1,181.6 512.2,191.4" fill="#849da4"/>
<line x1="512.0" y1="159.2" x2="530.3" y2="149.5" stroke="#c9dde1" stroke-width="1"/>
<polygon points="384.8,146.2 395.2,152.5 397.7,184.6 387.5,178.2" fill="#bad3d8"/>
<line x1="384.8" y1="146.2" x2="395.2" y2="152.5" stroke="#c9dde1" stroke-width="1"/>
<polygon points="863.0,176.6 883.7,159.9 876.2,192.1 855.8,209.1" fill="#9ab2b6"/>
<line x1="863.0" y1="176.6" x2="883.7" y2="159.9" stroke="#c9dde1" stroke-width="1"/>
<polygon points="315.8,155.6 348.6,141.0 352.0,172.9 319.9,187.7" fill="#849da4"/>
<line x1="315.8" y1="155.6" x2="348.6" y2="141.0" stroke="#c9dde1" stroke-width="1"/>
<polygon points="496.4,150.8 512.0,159.2 512.2,191.4 496.9,182.9" fill="#c2d9dd"/>
<line x1="496.4" y1="150.8" x2="512.0" y2="159.2" stroke="#c9dde1" stroke-width="1"/>
<polygon points="827.0,161.8 863.0,176.6 855.8,209.1 820.6,194.0" fill="#a9c1c4"/>
<line x1="827.0" y1="161.8" x2="863.0" y2="176.6" stroke="#c9dde1" stroke-width="1"/>
<polygon points="428.6,150.7 442.2,158.6 443.8,190.8 430.5,182.8" fill="#b0cad0"/>
<line x1="428.6" y1="150.7" x2="442.2" y2="158.6" stroke="#c9dde1" stroke-width="1"/>
<polygon points="544.8,157.0 553.8,161.6 553.1,194.0 544.3,189.2" fill="#bad3d8"/>
<line x1="544.8" y1="157.0" x2="553.8" y2="161.6" stroke="#c9dde1" stroke-width="1"/>
<polygon points="408.4,160.5 428.6,150.7 430.5,182.8 410.7,192.8" fill="#98afb5"/>
<line x1="408.4" y1="160.5" x2="428.6" y2="150.7" stroke="#c9dde1" stroke-width="1"/>
<polygon points="304.2,147.9 315.8,155.6 319.9,187.7 308.6,179.9" fill="#c2d9dd"/>
<line x1="304.2" y1="147.9" x2="315.8" y2="155.6" stroke="#c9dde1" stroke-width="1"/>
<polygon points="395.2,152.5 408.4,160.5 410.7,192.8 397.7,184.6" fill="#c8dce0"/>
<line x1="395.2" y1="152.5" x2="408.4" y2="160.5" stroke="#c9dde1" stroke-width="1"/>
<polygon points="526.5,166.9 544.8,157.0 544.3,189.2 526.4,199.4" fill="#8aa2a9"/>
<line x1="526.5" y1="166.9" x2="544.8" y2="157.0" stroke="#c9dde1" stroke-width="1"/>
<polygon points="460.6,169.2 496.4,150.8 496.9,182.9 461.9,201.6" fill="#98afb5"/>
<line x1="460.6" y1="169.2" x2="496.4" y2="150.8" stroke="#c9dde1" stroke-width="1"/>
<polygon points="364.1,150.6 382.3,162.0 385.2,194.3 367.3,182.7" fill="#c2d9dd"/>
<line x1="364.1" y1="150.6" x2="382.3" y2="162.0" stroke="#c9dde1" stroke-width="1"/>
<polygon points="512.0,159.2 526.5,166.9 526.4,199.4 512.2,191.4" fill="#c2d9dd"/>
<line x1="512.0" y1="159.2" x2="526.5" y2="166.9" stroke="#c9dde1" stroke-width="1"/>
<polygon points="891.6,188.4 911.9,171.0 903.7,203.3 883.7,221.0" fill="#7f989c"/>
<line x1="891.6" y1="188.4" x2="911.9" y2="171.0" stroke="#c9dde1" stroke-width="1"/>
<polygon points="331.1,165.8 364.1,150.6 367.3,182.7 335.0,198.1" fill="#8aa2a9"/>
<line x1="331.1" y1="165.8" x2="364.1" y2="150.6" stroke="#c9dde1" stroke-width="1"/>
<polygon points="553.8,161.6 572.7,171.4 571.6,204.0 553.1,194.0" fill="#bad3d8"/>
<line x1="553.8" y1="161.6" x2="572.7" y2="171.4" stroke="#c9dde1" stroke-width="1"/>
<polygon points="442.2,158.6 460.6,169.2 461.9,201.6 443.8,190.8" fill="#c8dce0"/>
<line x1="442.2" y1="158.6" x2="460.6" y2="169.2" stroke="#c9dde1" stroke-width="1"/>
<polygon points="422.0,168.6 442.2,158.6 443.8,190.8 424.0,201.1" fill="#8aa2a9"/>
<line x1="422.0" y1="168.6" x2="442.2" y2="158.6" stroke="#c9dde1" stroke-width="1"/>
<polygon points="315.8,155.6 331.1,165.8 335.0,198.1 319.9,187.7" fill="#bad3d8"/>
<line x1="315.8" y1="155.6" x2="331.1" y2="165.8" stroke="#c9dde1" stroke-width="1"/>
<polygon points="863.0,176.6 891.6,188.4 883.7,221.0 855.8,209.1" fill="#b3cacd"/>
<line x1="863.0" y1="176.6" x2="891.6" y2="188.4" stroke="#c9dde1" stroke-width="1"/>
<polygon points="408.4,160.5 422.0,168.6 424.0,201.1 410.7,192.8" fill="#b0cad0"/>
<line x1="408.4" y1="160.5" x2="422.0" y2="168.6" stroke="#c9dde1" stroke-width="1"/>
<polygon points="476.1,178.1 512.0,159.2 512.2,191.4 477.1,210.8" fill="#98afb5"/>
<line x1="476.1" y1="178.1" x2="512.0" y2="159.2" stroke="#c9dde1" stroke-width="1"/>
<polygon points="382.3,162.0 397.8,171.6 400.3,204.0 385.2,194.3" fill="#bad3d8"/>
<line x1="382.3" y1="162.0" x2="397.8" y2="171.6" stroke="#c9dde1" stroke-width="1"/>
<polygon points="554.3,181.9 572.7,171.4 571.6,204.0 553.6,214.6" fill="#92aab0"/>
<line x1="554.3" y1="181.9" x2="572.7" y2="171.4" stroke="#c9dde1" stroke-width="1"/>
<polygon points="460.6,169.2 476.1,178.1 477.1,210.8 461.9,201.6" fill="#c2d9dd"/>
<line x1="460.6" y1="169.2" x2="476.1" y2="178.1" stroke="#c9dde1" stroke-width="1"/>
<polygon points="535.4,171.8 554.3,181.9 553.6,214.6 535.1,204.3" fill="#c8dce0"/>
<line x1="535.4" y1="171.8" x2="554.3" y2="181.9" stroke="#c9dde1" stroke-width="1"/>
<polygon points="349.1,177.8 382.3,162.0 385.2,194.3 352.7,210.3" fill="#849da4"/>
<line x1="349.1" y1="177.8" x2="382.3" y2="162.0" stroke="#c9dde1" stroke-width="1"/>
<polygon points="440.2,179.6 460.6,169.2 461.9,201.6 441.9,212.3" fill="#8aa2a9"/>
<line x1="440.2" y1="179.6" x2="460.6" y2="169.2" stroke="#c9dde1" stroke-width="1"/>
<polygon points="422.0,168.6 440.2,179.6 441.9,212.3 424.0,201.1" fill="#b0cad0"/>
<line x1="422.0" y1="168.6" x2="440.2" y2="179.6" stroke="#c9dde1" stroke-width="1"/>
<polygon points="331.1,165.8 349.1,177.8 352.7,210.3 335.0,198.1" fill="#b0cad0"/>
<line x1="331.1" y1="165.8" x2="349.1" y2="177.8" stroke="#c9dde1" stroke-width="1"/>
<polygon points="499.5,191.6 535.4,171.8 535.1,204.3 499.9,224.5" fill="#98afb5"/>
<line x1="499.5" y1="191.6" x2="535.4" y2="171.8" stroke="#c9dde1" stroke-width="1"/>
<polygon points="590.7,180.8 608.8,190.2 606.9,223.0 589.2,213.5" fill="#bad3d8"/>
<line x1="590.7" y1="180.8" x2="608.8" y2="190.2" stroke="#c9dde1" stroke-width="1"/>
<polygon points="397.8,171.6 418.3,184.3 420.4,217.0 400.3,204.0" fill="#c8dce0"/>
<line x1="397.8" y1="171.6" x2="418.3" y2="184.3" stroke="#c9dde1" stroke-width="1"/>
<polygon points="476.1,178.1 490.6,186.5 491.2,219.2 477.1,210.8" fill="#b0cad0"/>
<line x1="476.1" y1="178.1" x2="490.6" y2="186.5" stroke="#c9dde1" stroke-width="1"/>
<polygon points="572.0,191.9 590.7,180.8 589.2,213.5 570.9,224.8" fill="#7f989f"/>
<line x1="572.0" y1="191.9" x2="590.7" y2="180.8" stroke="#c9dde1" stroke-width="1"/>
<polygon points="364.3,187.9 397.8,171.6 400.3,204.0 367.6,220.6" fill="#98afb5"/>
<line x1="364.3" y1="187.9" x2="397.8" y2="171.6" stroke="#c9dde1" stroke-width="1"/>
<polygon points="455.7,188.9 476.1,178.1 477.1,210.8 457.1,221.7" fill="#849da4"/>
<line x1="455.7" y1="188.9" x2="476.1" y2="178.1" stroke="#c9dde1" stroke-width="1"/>
<polygon points="440.2,179.6 455.7,188.9 457.1,221.7 441.9,212.3" fill="#bad3d8"/>
<line x1="440.2" y1="179.6" x2="455.7" y2="188.9" stroke="#c9dde1" stroke-width="1"/>
<polygon points="349.1,177.8 364.3,187.9 367.6,220.6 352.7,210.3" fill="#c2d9dd"/>
<line x1="349.1" y1="177.8" x2="364.3" y2="187.9" stroke="#c9dde1" stroke-width="1"/>
<polygon points="490.6,186.5 499.5,191.6 499.9,224.5 491.2,219.2" fill="#b0cad0"/>
<line x1="490.6" y1="186.5" x2="499.5" y2="191.6" stroke="#c9dde1" stroke-width="1"/>
<polygon points="608.8,190.2 628.6,200.5 626.3,233.5 606.9,223.0" fill="#c2d9dd"/>
<line x1="608.8" y1="190.2" x2="628.6" y2="200.5" stroke="#c9dde1" stroke-width="1"/>
<polygon points="518.4,202.5 554.3,181.9 553.6,214.6 518.4,235.6" fill="#849da4"/>
<line x1="518.4" y1="202.5" x2="554.3" y2="181.9" stroke="#c9dde1" stroke-width="1"/>
<polygon points="590.1,201.6 608.8,190.2 606.9,223.0 588.6,234.7" fill="#7a939b"/>
<line x1="590.1" y1="201.6" x2="608.8" y2="190.2" stroke="#c9dde1" stroke-width="1"/>
<polygon points="418.3,184.3 434.2,194.2 436.0,227.1 420.4,217.0" fill="#bad3d8"/>
<line x1="418.3" y1="184.3" x2="434.2" y2="194.2" stroke="#c9dde1" stroke-width="1"/>
<polygon points="470.1,197.6 490.6,186.5 491.2,219.2 471.2,230.5" fill="#849da4"/>
<line x1="470.1" y1="197.6" x2="490.6" y2="186.5" stroke="#c9dde1" stroke-width="1"/>
<polygon points="572.0,191.9 590.1,201.6 588.6,234.7 570.9,224.8" fill="#bad3d8"/>
<line x1="572.0" y1="191.9" x2="590.1" y2="201.6" stroke="#c9dde1" stroke-width="1"/>
<polygon points="555.3,201.8 572.0,191.9 570.9,224.8 554.6,234.8" fill="#7a939b"/>
<line x1="555.3" y1="201.8" x2="572.0" y2="191.9" stroke="#c9dde1" stroke-width="1"/>
<polygon points="455.7,188.9 470.1,197.6 471.2,230.5 457.1,221.7" fill="#c2d9dd"/>
<line x1="455.7" y1="188.9" x2="470.1" y2="197.6" stroke="#c9dde1" stroke-width="1"/>
<polygon points="654.4,207.4 670.5,196.7 667.3,229.6 651.5,240.5" fill="#869ea5"/>
<line x1="654.4" y1="207.4" x2="670.5" y2="196.7" stroke="#c9dde1" stroke-width="1"/>
<polygon points="499.5,191.6 518.4,202.5 518.4,235.6 499.9,224.5" fill="#bad3d8"/>
<line x1="499.5" y1="191.6" x2="518.4" y2="202.5" stroke="#c9dde1" stroke-width="1"/>
<polygon points="384.6,201.4 418.3,184.3 420.4,217.0 387.6,234.4" fill="#98afb5"/>
<line x1="384.6" y1="201.4" x2="418.3" y2="184.3" stroke="#c9dde1" stroke-width="1"/>
<polygon points="479.0,202.9 499.5,191.6 499.9,224.5 479.9,236.0" fill="#98afb5"/>
<line x1="479.0" y1="202.9" x2="499.5" y2="191.6" stroke="#c9dde1" stroke-width="1"/>
<polygon points="670.5,196.7 708.1,215.4 703.9,248.6 667.3,229.6" fill="#b0cad0"/>
<line x1="670.5" y1="196.7" x2="708.1" y2="215.4" stroke="#c9dde1" stroke-width="1"/>
<polygon points="364.3,187.9 384.6,201.4 387.6,234.4 367.6,220.6" fill="#b0cad0"/>
<line x1="364.3" y1="187.9" x2="384.6" y2="201.4" stroke="#c9dde1" stroke-width="1"/>
<polygon points="628.6,200.5 653.8,213.5 650.8,246.7 626.3,233.5" fill="#b0cad0"/>
<line x1="628.6" y1="200.5" x2="653.8" y2="213.5" stroke="#c9dde1" stroke-width="1"/>
<polygon points="609.9,212.3 628.6,200.5 626.3,233.5 608.0,245.5" fill="#869ea5"/>
<line x1="609.9" y1="212.3" x2="628.6" y2="200.5" stroke="#c9dde1" stroke-width="1"/>
<polygon points="470.1,197.6 479.0,202.9 479.9,236.0 471.2,230.5" fill="#b0cad0"/>
<line x1="470.1" y1="197.6" x2="479.0" y2="202.9" stroke="#c9dde1" stroke-width="1"/>
<polygon points="590.1,201.6 609.9,212.3 608.0,245.5 588.6,234.7" fill="#bad3d8"/>
<line x1="590.1" y1="201.6" x2="609.9" y2="212.3" stroke="#c9dde1" stroke-width="1"/>
<polygon points="573.4,211.8 590.1,201.6 588.6,234.7 572.3,245.0" fill="#7a939b"/>
<line x1="573.4" y1="211.8" x2="590.1" y2="201.6" stroke="#c9dde1" stroke-width="1"/>
<polygon points="434.2,194.2 456.6,208.1 458.0,241.3 436.0,227.1" fill="#c2d9dd"/>
<line x1="434.2" y1="194.2" x2="456.6" y2="208.1" stroke="#c9dde1" stroke-width="1"/>
<polygon points="555.3,201.8 573.4,211.8 572.3,245.0 554.6,234.8" fill="#b0cad0"/>
<line x1="555.3" y1="201.8" x2="573.4" y2="211.8" stroke="#c9dde1" stroke-width="1"/>
<polygon points="537.7,212.2 555.3,201.8 554.6,234.8 537.3,245.4" fill="#869ea5"/>
<line x1="537.7" y1="212.2" x2="555.3" y2="201.8" stroke="#c9dde1" stroke-width="1"/>
<polygon points="400.4,211.9 434.2,194.2 436.0,227.1 403.0,245.0" fill="#98afb5"/>
<line x1="400.4" y1="211.9" x2="434.2" y2="194.2" stroke="#c9dde1" stroke-width="1"/>
<polygon points="497.8,214.3 518.4,202.5 518.4,235.6 498.3,247.5" fill="#98afb5"/>
<line x1="497.8" y1="214.3" x2="518.4" y2="202.5" stroke="#c9dde1" stroke-width="1"/>
<polygon points="479.0,202.9 497.8,214.3 498.3,247.5 479.9,236.0" fill="#c8dce0"/>
<line x1="479.0" y1="202.9" x2="497.8" y2="214.3" stroke="#c9dde1" stroke-width="1"/>
<polygon points="654.4,207.4 692.1,226.7 688.3,260.1 651.5,240.5" fill="#c2d9dd"/>
<line x1="654.4" y1="207.4" x2="692.1" y2="226.7" stroke="#c9dde1" stroke-width="1"/>
<polygon points="653.8,213.5 667.0,220.4 663.8,253.7 650.8,246.7" fill="#b0cad0"/>
<line x1="653.8" y1="213.5" x2="667.0" y2="220.4" stroke="#c9dde1" stroke-width="1"/>
<polygon points="384.6,201.4 400.4,211.9 403.0,245.0 387.6,234.4" fill="#c8dce0"/>
<line x1="384.6" y1="201.4" x2="400.4" y2="211.9" stroke="#c9dde1" stroke-width="1"/>
<polygon points="692.1,226.7 708.1,215.4 703.9,248.6 688.3,260.1" fill="#869ea5"/>
<line x1="692.1" y1="226.7" x2="708.1" y2="215.4" stroke="#c9dde1" stroke-width="1"/>
<polygon points="593.3,222.9 609.9,212.3 608.0,245.5 591.7,256.3" fill="#869ea5"/>
<line x1="593.3" y1="222.9" x2="609.9" y2="212.3" stroke="#c9dde1" stroke-width="1"/>
<polygon points="635.2,225.9 653.8,213.5 650.8,246.7 632.6,259.3" fill="#869ea5"/>
<line x1="635.2" y1="225.9" x2="653.8" y2="213.5" stroke="#c9dde1" stroke-width="1"/>
<polygon points="573.4,211.8 593.3,222.9 591.7,256.3 572.3,245.0" fill="#b0cad0"/>
<line x1="573.4" y1="211.8" x2="593.3" y2="222.9" stroke="#c9dde1" stroke-width="1"/>
<polygon points="609.9,212.3 635.2,225.9 632.6,259.3 608.0,245.5" fill="#c8dce0"/>
<line x1="609.9" y1="212.3" x2="635.2" y2="225.9" stroke="#c9dde1" stroke-width="1"/>
<polygon points="555.8,222.6 573.4,211.8 572.3,245.0 555.0,256.0" fill="#7f989f"/>
<line x1="555.8" y1="222.6" x2="573.4" y2="211.8" stroke="#c9dde1" stroke-width="1"/>
<polygon points="456.6,208.1 472.5,218.0 473.6,251.3 458.0,241.3" fill="#c2d9dd"/>
<line x1="456.6" y1="208.1" x2="472.5" y2="218.0" stroke="#c9dde1" stroke-width="1"/>
<polygon points="537.7,212.2 555.8,222.6 555.0,256.0 537.3,245.4" fill="#c2d9dd"/>
<line x1="537.7" y1="212.2" x2="555.8" y2="222.6" stroke="#c9dde1" stroke-width="1"/>
<polygon points="708.1,215.4 761.9,242.1 756.4,275.7 703.9,248.6" fill="#c8dce0"/>
<line x1="708.1" y1="215.4" x2="761.9" y2="242.1" stroke="#c9dde1" stroke-width="1"/>
<polygon points="512.7,227.1 537.7,212.2 537.3,245.4 512.8,260.5" fill="#7f989f"/>
<line x1="512.7" y1="227.1" x2="537.7" y2="212.2" stroke="#c9dde1" stroke-width="1"/>
<polygon points="667.0,220.4 691.6,233.1 687.7,266.6 663.8,253.7" fill="#b0cad0"/>
<line x1="667.0" y1="220.4" x2="691.6" y2="233.1" stroke="#c9dde1" stroke-width="1"/>
<polygon points="648.5,233.1 667.0,220.4 663.8,253.7 645.6,266.6" fill="#7a939b"/>
<line x1="648.5" y1="233.1" x2="667.0" y2="220.4" stroke="#c9dde1" stroke-width="1"/>
<polygon points="422.7,226.7 456.6,208.1 458.0,241.3 424.9,260.1" fill="#8aa2a9"/>
<line x1="422.7" y1="226.7" x2="456.6" y2="208.1" stroke="#c9dde1" stroke-width="1"/>
<polygon points="400.4,211.9 422.7,226.7 424.9,260.1 403.0,245.0" fill="#c8dce0"/>
<line x1="400.4" y1="211.9" x2="422.7" y2="226.7" stroke="#c9dde1" stroke-width="1"/>
<polygon points="575.7,234.1 593.3,222.9 591.7,256.3 574.5,267.6" fill="#7f989f"/>
<line x1="575.7" y1="234.1" x2="593.3" y2="222.9" stroke="#c9dde1" stroke-width="1"/>
<polygon points="593.3,222.9 618.6,237.0 616.4,270.5 591.7,256.3" fill="#c2d9dd"/>
<line x1="593.3" y1="222.9" x2="618.6" y2="237.0" stroke="#c9dde1" stroke-width="1"/>
<polygon points="555.8,222.6 575.7,234.1 574.5,267.6 555.0,256.0" fill="#c8dce0"/>
<line x1="555.8" y1="222.6" x2="575.7" y2="234.1" stroke="#c9dde1" stroke-width="1"/>
<polygon points="618.6,237.0 635.2,225.9 632.6,259.3 616.4,270.5" fill="#869ea5"/>
<line x1="618.6" y1="237.0" x2="635.2" y2="225.9" stroke="#c9dde1" stroke-width="1"/>
<polygon points="472.5,218.0 496.0,232.6 496.5,266.1 473.6,251.3" fill="#b0cad0"/>
<line x1="472.5" y1="218.0" x2="496.0" y2="232.6" stroke="#c9dde1" stroke-width="1"/>
<polygon points="530.7,238.0 555.8,222.6 555.0,256.0 530.5,271.6" fill="#7a939b"/>
<line x1="530.7" y1="238.0" x2="555.8" y2="222.6" stroke="#c9dde1" stroke-width="1"/>
<polygon points="438.4,237.2 472.5,218.0 473.6,251.3 440.3,270.7" fill="#8aa2a9"/>
<line x1="438.4" y1="237.2" x2="472.5" y2="218.0" stroke="#c9dde1" stroke-width="1"/>
<polygon points="691.6,233.1 713.7,244.6 709.3,278.3 687.7,266.6" fill="#c2d9dd"/>
<line x1="691.6" y1="233.1" x2="713.7" y2="244.6" stroke="#c9dde1" stroke-width="1"/>
<polygon points="692.1,226.7 746.3,254.5 741.0,288.3 688.3,260.1" fill="#bad3d8"/>
<line x1="692.1" y1="226.7" x2="746.3" y2="254.5" stroke="#c9dde1" stroke-width="1"/>
<polygon points="673.1,246.3 691.6,233.1 687.7,266.6 669.6,280.0" fill="#7a939b"/>
<line x1="673.1" y1="246.3" x2="691.6" y2="233.1" stroke="#c9dde1" stroke-width="1"/>
<polygon points="512.7,227.1 530.7,238.0 530.5,271.6 512.8,260.5" fill="#c2d9dd"/>
<line x1="512.7" y1="227.1" x2="530.7" y2="238.0" stroke="#c9dde1" stroke-width="1"/>
<polygon points="631.9,244.4 648.5,233.1 645.6,266.6 629.4,278.1" fill="#7a939b"/>
<line x1="631.9" y1="244.4" x2="648.5" y2="233.1" stroke="#c9dde1" stroke-width="1"/>
<polygon points="618.6,237.0 631.9,244.4 629.4,278.1 616.4,270.5" fill="#c2d9dd"/>
<line x1="618.6" y1="237.0" x2="631.9" y2="244.4" stroke="#c9dde1" stroke-width="1"/>
<polygon points="422.7,226.7 438.4,237.2 440.3,270.7 424.9,260.1" fill="#bad3d8"/>
<line x1="422.7" y1="226.7" x2="438.4" y2="237.2" stroke="#c9dde1" stroke-width="1"/>
<polygon points="746.3,254.5 761.9,242.1 756.4,275.7 741.0,288.3" fill="#7b949b"/>
<line x1="746.3" y1="254.5" x2="761.9" y2="242.1" stroke="#c9dde1" stroke-width="1"/>
<polygon points="575.7,234.1 601.0,248.7 599.2,282.4 574.5,267.6" fill="#c8dce0"/>
<line x1="575.7" y1="234.1" x2="601.0" y2="248.7" stroke="#c9dde1" stroke-width="1"/>
<polygon points="496.0,232.6 512.2,242.7 512.4,276.3 496.5,266.1" fill="#c8dce0"/>
<line x1="496.0" y1="232.6" x2="512.2" y2="242.7" stroke="#c9dde1" stroke-width="1"/>
<polygon points="601.0,248.7 618.6,237.0 616.4,270.5 599.2,282.4" fill="#869ea5"/>
<line x1="601.0" y1="248.7" x2="618.6" y2="237.0" stroke="#c9dde1" stroke-width="1"/>
<polygon points="761.9,242.1 801.9,262.0 795.4,295.8 756.4,275.7" fill="#c8dce0"/>
<line x1="761.9" y1="242.1" x2="801.9" y2="262.0" stroke="#c9dde1" stroke-width="1"/>
<polygon points="550.7,250.0 575.7,234.1 574.5,267.6 549.9,283.8" fill="#7a939b"/>
<line x1="550.7" y1="250.0" x2="575.7" y2="234.1" stroke="#c9dde1" stroke-width="1"/>
<polygon points="695.4,258.3 713.7,244.6 709.3,278.3 691.3,292.2" fill="#7a939b"/>
<line x1="695.4" y1="258.3" x2="713.7" y2="244.6" stroke="#c9dde1" stroke-width="1"/>
<polygon points="530.7,238.0 550.7,250.0 549.9,283.8 530.5,271.6" fill="#bad3d8"/>
<line x1="530.7" y1="238.0" x2="550.7" y2="250.0" stroke="#c9dde1" stroke-width="1"/>
<polygon points="461.8,252.7 496.0,232.6 496.5,266.1 463.1,286.5" fill="#849da4"/>
<line x1="461.8" y1="252.7" x2="496.0" y2="232.6" stroke="#c9dde1" stroke-width="1"/>
<polygon points="673.1,246.3 695.4,258.3 691.3,292.2 669.6,280.0" fill="#b0cad0"/>
<line x1="673.1" y1="246.3" x2="695.4" y2="258.3" stroke="#c9dde1" stroke-width="1"/>
<polygon points="656.7,258.1 673.1,246.3 669.6,280.0 653.5,292.0" fill="#7f989f"/>
<line x1="656.7" y1="258.1" x2="673.1" y2="246.3" stroke="#c9dde1" stroke-width="1"/>
<polygon points="438.4,237.2 461.8,252.7 463.1,286.5 440.3,270.7" fill="#bad3d8"/>
<line x1="438.4" y1="237.2" x2="461.8" y2="252.7" stroke="#c9dde1" stroke-width="1"/>
<polygon points="601.0,248.7 614.4,256.4 612.2,290.2 599.2,282.4" fill="#c2d9dd"/>
<line x1="601.0" y1="248.7" x2="614.4" y2="256.4" stroke="#c9dde1" stroke-width="1"/>
<polygon points="512.2,242.7 532.7,255.4 532.4,289.2 512.4,276.3" fill="#c2d9dd"/>
<line x1="512.2" y1="242.7" x2="532.7" y2="255.4" stroke="#c9dde1" stroke-width="1"/>
<polygon points="719.7,264.0 732.3,254.2 727.4,288.0 715.0,297.9" fill="#849da4"/>
<line x1="719.7" y1="264.0" x2="732.3" y2="254.2" stroke="#c9dde1" stroke-width="1"/>
<polygon points="746.3,254.5 786.5,275.1 780.3,309.2 741.0,288.3" fill="#bad3d8"/>
<line x1="746.3" y1="254.5" x2="786.5" y2="275.1" stroke="#c9dde1" stroke-width="1"/>
<polygon points="576.0,265.4 601.0,248.7 599.2,282.4 574.7,299.4" fill="#7f989f"/>
<line x1="576.0" y1="265.4" x2="601.0" y2="248.7" stroke="#c9dde1" stroke-width="1"/>
<polygon points="478.0,263.5 512.2,242.7 512.4,276.3 478.9,297.4" fill="#849da4"/>
<line x1="478.0" y1="263.5" x2="512.2" y2="242.7" stroke="#c9dde1" stroke-width="1"/>
<polygon points="732.3,254.2 781.3,279.6 775.1,313.8 727.4,288.0" fill="#c2d9dd"/>
<line x1="732.3" y1="254.2" x2="781.3" y2="279.6" stroke="#c9dde1" stroke-width="1"/>
<polygon points="786.5,275.1 801.9,262.0 795.4,295.8 780.3,309.2" fill="#869ea5"/>
<line x1="786.5" y1="275.1" x2="801.9" y2="262.0" stroke="#c9dde1" stroke-width="1"/>
<polygon points="550.7,250.0 576.0,265.4 574.7,299.4 549.9,283.8" fill="#c8dce0"/>
<line x1="550.7" y1="250.0" x2="576.0" y2="265.4" stroke="#c9dde1" stroke-width="1"/>
<polygon points="679.0,270.6 695.4,258.3 691.3,292.2 675.3,304.6" fill="#7a939b"/>
<line x1="679.0" y1="270.6" x2="695.4" y2="258.3" stroke="#c9dde1" stroke-width="1"/>
<polygon points="656.7,258.1 679.0,270.6 675.3,304.6 653.5,292.0" fill="#c2d9dd"/>
<line x1="656.7" y1="258.1" x2="679.0" y2="270.6" stroke="#c9dde1" stroke-width="1"/>
<polygon points="639.2,270.7 656.7,258.1 653.5,292.0 636.4,304.7" fill="#869ea5"/>
<line x1="639.2" y1="270.7" x2="656.7" y2="258.1" stroke="#c9dde1" stroke-width="1"/>
<polygon points="614.4,256.4 639.2,270.7 636.4,304.7 612.2,290.2" fill="#c2d9dd"/>
<line x1="614.4" y1="256.4" x2="639.2" y2="270.7" stroke="#c9dde1" stroke-width="1"/>
<polygon points="707.2,273.7 719.7,264.0 715.0,297.9 702.8,307.8" fill="#8aa2a9"/>
<line x1="707.2" y1="273.7" x2="719.7" y2="264.0" stroke="#c9dde1" stroke-width="1"/>
<polygon points="461.8,252.7 478.0,263.5 478.9,297.4 463.1,286.5" fill="#c8dce0"/>
<line x1="461.8" y1="252.7" x2="478.0" y2="263.5" stroke="#c9dde1" stroke-width="1"/>
<polygon points="589.4,273.5 614.4,256.4 612.2,290.2 587.7,307.6" fill="#7f989f"/>
<line x1="589.4" y1="273.5" x2="614.4" y2="256.4" stroke="#c9dde1" stroke-width="1"/>
<polygon points="532.7,255.4 554.8,269.1 554.0,303.2 532.4,289.2" fill="#b0cad0"/>
<line x1="532.7" y1="255.4" x2="554.8" y2="269.1" stroke="#c9dde1" stroke-width="1"/>
<polygon points="719.7,264.0 768.9,290.2 762.9,324.5 715.0,297.9" fill="#c2d9dd"/>
<line x1="719.7" y1="264.0" x2="768.9" y2="290.2" stroke="#c9dde1" stroke-width="1"/>
<polygon points="498.3,277.0 532.7,255.4 532.4,289.2 498.9,311.2" fill="#8aa2a9"/>
<line x1="498.3" y1="277.0" x2="532.7" y2="255.4" stroke="#c9dde1" stroke-width="1"/>
<polygon points="576.0,265.4 589.4,273.5 587.7,307.6 574.7,299.4" fill="#c2d9dd"/>
<line x1="576.0" y1="265.4" x2="589.4" y2="273.5" stroke="#c9dde1" stroke-width="1"/>
<polygon points="661.6,283.6 679.0,270.6 675.3,304.6 658.2,317.8" fill="#869ea5"/>
<line x1="661.6" y1="283.6" x2="679.0" y2="270.6" stroke="#c9dde1" stroke-width="1"/>
<polygon points="693.6,284.2 707.2,273.7 702.8,307.8 689.4,318.5" fill="#92aab0"/>
<line x1="693.6" y1="284.2" x2="707.2" y2="273.7" stroke="#c9dde1" stroke-width="1"/>
<polygon points="639.2,270.7 661.6,283.6 658.2,317.8 636.4,304.7" fill="#bad3d8"/>
<line x1="639.2" y1="270.7" x2="661.6" y2="283.6" stroke="#c9dde1" stroke-width="1"/>
<polygon points="478.0,263.5 498.3,277.0 498.9,311.2 478.9,297.4" fill="#bad3d8"/>
<line x1="478.0" y1="263.5" x2="498.3" y2="277.0" stroke="#c9dde1" stroke-width="1"/>
<polygon points="768.9,290.2 781.3,279.6 775.1,313.8 762.9,324.5" fill="#98afb5"/>
<line x1="768.9" y1="290.2" x2="781.3" y2="279.6" stroke="#c9dde1" stroke-width="1"/>
<polygon points="554.8,269.1 575.1,281.8 573.8,316.0 554.0,303.2" fill="#c8dce0"/>
<line x1="554.8" y1="269.1" x2="575.1" y2="281.8" stroke="#c9dde1" stroke-width="1"/>
<polygon points="614.2,288.5 639.2,270.7 636.4,304.7 612.0,322.8" fill="#7a939b"/>
<line x1="614.2" y1="288.5" x2="639.2" y2="270.7" stroke="#c9dde1" stroke-width="1"/>
<polygon points="707.2,273.7 756.6,300.7 750.9,335.1 702.8,307.8" fill="#c2d9dd"/>
<line x1="707.2" y1="273.7" x2="756.6" y2="300.7" stroke="#c9dde1" stroke-width="1"/>
<polygon points="589.4,273.5 614.2,288.5 612.0,322.8 587.7,307.6" fill="#b0cad0"/>
<line x1="589.4" y1="273.5" x2="614.2" y2="288.5" stroke="#c9dde1" stroke-width="1"/>
<polygon points="520.4,291.7 554.8,269.1 554.0,303.2 520.4,326.1" fill="#98afb5"/>
<line x1="520.4" y1="291.7" x2="554.8" y2="269.1" stroke="#c9dde1" stroke-width="1"/>
<polygon points="676.5,297.5 693.6,284.2 689.4,318.5 672.7,331.9" fill="#98afb5"/>
<line x1="676.5" y1="297.5" x2="693.6" y2="284.2" stroke="#c9dde1" stroke-width="1"/>
<polygon points="756.6,300.7 768.9,290.2 762.9,324.5 750.9,335.1" fill="#8aa2a9"/>
<line x1="756.6" y1="300.7" x2="768.9" y2="290.2" stroke="#c9dde1" stroke-width="1"/>
<polygon points="498.3,277.0 520.4,291.7 520.4,326.1 498.9,311.2" fill="#bad3d8"/>
<line x1="498.3" y1="277.0" x2="520.4" y2="291.7" stroke="#c9dde1" stroke-width="1"/>
<polygon points="636.8,302.2 661.6,283.6 658.2,317.8 633.9,336.6" fill="#869ea5"/>
<line x1="636.8" y1="302.2" x2="661.6" y2="283.6" stroke="#c9dde1" stroke-width="1"/>
<polygon points="693.6,284.2 743.2,312.1 737.8,346.7 689.4,318.5" fill="#c2d9dd"/>
<line x1="693.6" y1="284.2" x2="743.2" y2="312.1" stroke="#c9dde1" stroke-width="1"/>
<polygon points="575.1,281.8 606.9,301.5 604.8,336.0 573.8,316.0" fill="#c2d9dd"/>
<line x1="575.1" y1="281.8" x2="606.9" y2="301.5" stroke="#c9dde1" stroke-width="1"/>
<polygon points="614.2,288.5 636.8,302.2 633.9,336.6 612.0,322.8" fill="#bad3d8"/>
<line x1="614.2" y1="288.5" x2="636.8" y2="302.2" stroke="#c9dde1" stroke-width="1"/>
<polygon points="540.8,305.2 575.1,281.8 573.8,316.0 540.3,339.7" fill="#8aa2a9"/>
<line x1="540.8" y1="305.2" x2="575.1" y2="281.8" stroke="#c9dde1" stroke-width="1"/>
<polygon points="743.2,312.1 756.6,300.7 750.9,335.1 737.8,346.7" fill="#98afb5"/>
<line x1="743.2" y1="312.1" x2="756.6" y2="300.7" stroke="#c9dde1" stroke-width="1"/>
<polygon points="661.7,309.0 676.5,297.5 672.7,331.9 658.2,343.5" fill="#98afb5"/>
<line x1="661.7" y1="309.0" x2="676.5" y2="297.5" stroke="#c9dde1" stroke-width="1"/>
<polygon points="520.4,291.7 540.8,305.2 540.3,339.7 520.4,326.1" fill="#bad3d8"/>
<line x1="520.4" y1="291.7" x2="540.8" y2="305.2" stroke="#c9dde1" stroke-width="1"/>
<polygon points="676.5,297.5 726.5,326.5 721.3,361.2 672.7,331.9" fill="#b0cad0"/>
<line x1="676.5" y1="297.5" x2="726.5" y2="326.5" stroke="#c9dde1" stroke-width="1"/>
<polygon points="606.9,301.5 626.1,313.4 623.5,348.0 604.8,336.0" fill="#c8dce0"/>
<line x1="606.9" y1="301.5" x2="626.1" y2="313.4" stroke="#c9dde1" stroke-width="1"/>
<polygon points="649.2,318.6 661.7,309.0 658.2,343.5 646.0,353.3" fill="#849da4"/>
<line x1="649.2" y1="318.6" x2="661.7" y2="309.0" stroke="#c9dde1" stroke-width="1"/>
<polygon points="726.5,326.5 743.2,312.1 737.8,346.7 721.3,361.2" fill="#92aab0"/>
<line x1="726.5" y1="326.5" x2="743.2" y2="312.1" stroke="#c9dde1" stroke-width="1"/>
<polygon points="572.6,326.4 606.9,301.5 604.8,336.0 571.3,361.1" fill="#849da4"/>
<line x1="572.6" y1="326.4" x2="606.9" y2="301.5" stroke="#c9dde1" stroke-width="1"/>
<polygon points="540.8,305.2 572.6,326.4 571.3,361.1 540.3,339.7" fill="#c8dce0"/>
<line x1="540.8" y1="305.2" x2="572.6" y2="326.4" stroke="#c9dde1" stroke-width="1"/>
<polygon points="661.7,309.0 711.8,339.0 706.9,373.9 658.2,343.5" fill="#b0cad0"/>
<line x1="661.7" y1="309.0" x2="711.8" y2="339.0" stroke="#c9dde1" stroke-width="1"/>
<polygon points="626.1,313.4 653.0,330.2 649.7,365.0 623.5,348.0" fill="#b0cad0"/>
<line x1="626.1" y1="313.4" x2="653.0" y2="330.2" stroke="#c9dde1" stroke-width="1"/>
<polygon points="591.8,339.2 626.1,313.4 623.5,348.0 590.0,374.1" fill="#92aab0"/>
<line x1="591.8" y1="339.2" x2="626.1" y2="313.4" stroke="#c9dde1" stroke-width="1"/>
<polygon points="711.8,339.0 726.5,326.5 721.3,361.2 706.9,373.9" fill="#849da4"/>
<line x1="711.8" y1="339.0" x2="726.5" y2="326.5" stroke="#c9dde1" stroke-width="1"/>
<polygon points="649.2,318.6 699.5,349.5 694.9,384.5 646.0,353.3" fill="#c2d9dd"/>
<line x1="649.2" y1="318.6" x2="699.5" y2="349.5" stroke="#c9dde1" stroke-width="1"/>
<polygon points="572.6,326.4 591.8,339.2 590.0,374.1 571.3,361.1" fill="#c8dce0"/>
<line x1="572.6" y1="326.4" x2="591.8" y2="339.2" stroke="#c9dde1" stroke-width="1"/>
<polygon points="653.0,330.2 687.8,351.8 683.5,386.8 649.7,365.0" fill="#c2d9dd"/>
<line x1="653.0" y1="330.2" x2="687.8" y2="351.8" stroke="#c9dde1" stroke-width="1"/>
<polygon points="699.5,349.5 711.8,339.0 706.9,373.9 694.9,384.5" fill="#849da4"/>
<line x1="699.5" y1="349.5" x2="711.8" y2="339.0" stroke="#c9dde1" stroke-width="1"/>
<polygon points="618.9,357.2 653.0,330.2 649.7,365.0 616.3,392.3" fill="#8aa2a9"/>
<line x1="618.9" y1="357.2" x2="653.0" y2="330.2" stroke="#c9dde1" stroke-width="1"/>
<polygon points="591.8,339.2 618.9,357.2 616.3,392.3 590.0,374.1" fill="#c8dce0"/>
<line x1="591.8" y1="339.2" x2="618.9" y2="357.2" stroke="#c9dde1" stroke-width="1"/>
<polygon points="653.9,380.4 687.8,351.8 683.5,386.8 650.3,415.8" fill="#849da4"/>
<line x1="653.9" y1="380.4" x2="687.8" y2="351.8" stroke="#c9dde1" stroke-width="1"/>
<polygon points="618.9,357.2 653.9,380.4 650.3,415.8 616.3,392.3" fill="#bad3d8"/>
<line x1="618.9" y1="357.2" x2="653.9" y2="380.4" stroke="#c9dde1" stroke-width="1"/>
<polygon points="441.9,120.4 471.8,114.8 472.7,144.7 445.6,152.2" fill="#9fd3df"/>
<polygon points="496.1,94.2 518.5,84.9 520.4,101.7 501.7,111.1" fill="#8fc6d3"/>
<polygon points="556.0,120.4 584.0,114.8 608.3,127.9 608.3,141.0 582.1,144.7 559.7,133.5" fill="#74b2c2"/>
<polygon points="460.6,83.0 516.7,58.7 516.7,75.5 465.2,94.2" fill="#e3f0f5"/>
<path d="M466.2 87.7 L515.7 66.2" stroke="#8fc3d4" stroke-width="5" stroke-dasharray="3 5.500" fill="none"/>
<line x1="460.6" y1="82.6" x2="516.7" y2="58.3" stroke="#e3b9a6" stroke-width="1.5"/>
<polygon points="527.0,77.4 642.9,127.9 642.0,137.3 527.5,86.8" fill="#80968d"/>
<polygon points="526.0,64.3 643.9,117.6 642.9,127.9 527.0,77.4" fill="#dcedf3"/>
<path d="M527.9 71.8 L642.0 122.3" stroke="#9fd0de" stroke-width="5" stroke-dasharray="3 4" fill="none"/>
<line x1="526.0" y1="64.3" x2="643.9" y2="117.6" stroke="#c9a58c" stroke-width="1.5"/>
<polygon points="510.1,103.6 562.5,81.5 563.4,113.9 544.7,122.3 511.1,105.5" fill="#b7cdd2"/>
<polygon points="510.1,103.6 562.5,81.5 559.7,80.2 518.5,96.1" fill="#e0c7c0"/>
<polygon points="472.7,109.2 582.1,167.2 580.3,178.4 473.7,120.4" fill="#80968d"/>
<polygon points="471.8,93.3 584.0,152.2 582.1,167.2 472.7,109.2" fill="#deeef4"/>
<path d="M474.6 102.7 L581.2 159.7" stroke="#a4d3e0" stroke-width="6" stroke-dasharray="3 4" fill="none"/>
<polygon points="582.1,154.1 602.7,152.2 602.7,180.3 583.1,182.1" fill="#8aa1a8"/>
<polygon points="647.6,120.4 658.8,120.4 657.9,148.5 647.6,149.4" fill="#b08b72"/>
<polygon points="655.1,141.0 690.6,159.7 690.6,168.1 655.1,149.4" fill="#b3a5a3"/>
<path d="M593.4 150.3 L642.9 115.7 L651.3 120.4 L649.5 134.4 Q619.5 133.5 604.6 152.2 L597.1 154.5 Z" fill="#eaf4f7"/>
<path d="M602.7 148.5 L645.7 122.3" stroke="#a9cfdb" stroke-width="4" stroke-dasharray="2.5 3.500" fill="none"/>
<polygon points="605.5,152.2 652.3,178.4 651.3,193.4 647.6,191.5 608.3,170.9" fill="#e6f1f5"/>
<polygon points="613.0,162.5 617.1,164.7 617.1,176.5 613.0,174.3" fill="#9fb6bd"/>
<polygon points="622.3,167.5 626.5,169.8 626.5,181.6 622.3,179.3" fill="#9fb6bd"/>
<polygon points="631.7,172.6 635.8,174.8 635.8,186.6 631.7,184.4" fill="#9fb6bd"/>
<polygon points="641.0,177.6 645.2,179.9 645.2,191.7 641.0,189.4" fill="#9fb6bd"/>
<polygon points="608.3,152.2 647.6,137.3 651.3,144.7 651.3,178.4" fill="#8fb9c6"/>
<path d="M652.3 179.3 L690.6 156.3 L698.5 161.6 L696.6 173.2 Q673.8 176.5 663.5 192.4 L655.1 195.6 Z" fill="#eaf4f7"/>
<path d="M660.7 182.1 L692.5 163.4" stroke="#a9cfdb" stroke-width="4" stroke-dasharray="2.500 3.5" fill="none"/>
<polygon points="696.1,139.9 747.1,165.5 842.8,210.1 838.5,231.4 823.7,225.0 730.1,178.2 708.8,176.1" fill="#6ba7b6"/>
<polygon points="730.1,171.8 764.1,188.8 759.9,201.6 728.0,186.7" fill="#8fd0dc" fill-opacity="0.8"/>
<polygon points="793.9,195.2 842.8,216.5 840.7,231.4 791.8,210.1" fill="#8bccd9" fill-opacity="0.8"/>
<polygon points="745.0,167.6 796.0,193.1 793.9,201.6 745.0,178.2" fill="#5a9aab"/>
<polygon points="708.8,167.6 836.4,233.5 835.4,247.3 708.8,180.3" fill="#7d9a91"/>
<polygon points="757.7,214.4 834.3,252.6 832.2,261.1 757.7,220.7" fill="#79bccb"/>
<polygon points="736.5,222.9 791.8,250.5 790.7,265.4 736.5,237.7" fill="#8aa0a8"/>
<polygon points="659.9,208.0 823.7,290.9 822.6,301.5 659.9,218.6" fill="#869c92"/>
<polygon points="690.6,189.6 711.2,180.3 744.8,200.8 728.9,209.3" fill="#c3d6da"/>
<polygon points="690.6,178.4 714.9,189.6 714.9,195.2 690.6,189.6" fill="#dcc6c2"/>
<polygon points="689.7,189.6 728.9,209.3 731.8,234.5 701.8,219.5 690.6,208.3" fill="#e8f2f5"/>
<polygon points="728.9,209.3 744.8,200.8 744.8,219.5 731.8,234.5" fill="#d2e3e7"/>
<polygon points="700.9,204.6 705.0,206.6 705.0,217.7 700.9,215.4" fill="#8e9a8c"/>
<polygon points="710.2,209.3 714.4,211.3 714.4,222.3 710.2,220.1" fill="#8e9a8c"/>
<polygon points="662.6,202.7 731.8,238.2 731.8,242.9 662.6,207.4" fill="#7fc4d4"/>
<polygon points="292.5,147.5 471.1,267.9 471.0,308.3 297.0,181.0" fill="#8a9d95"/>
<polygon points="309.5,177.0 316.5,181.7 316.2,198.7 309.2,194.0" fill="#cfd0a8"/>
<polygon points="334.8,195.4 341.8,200.1 341.5,217.1 334.5,212.4" fill="#cfd0a8"/>
<polygon points="362.3,215.0 369.3,219.7 369.0,236.7 362.0,232.0" fill="#cfd0a8"/>
<polygon points="380.7,226.4 387.7,231.1 387.4,248.1 380.4,243.4" fill="#cfd0a8"/>
<polygon points="393.3,236.8 400.3,241.5 400.0,258.5 393.0,253.8" fill="#cfd0a8"/>
<polygon points="406.0,244.8 413.0,249.5 412.7,266.5 405.7,261.8" fill="#cfd0a8"/>
<polygon points="426.6,259.7 433.6,264.4 433.3,281.4 426.3,276.7" fill="#cfd0a8"/>
<polygon points="456.5,280.4 463.5,285.1 463.2,302.1 456.2,297.4" fill="#cfd0a8"/>
<polygon points="471.1,267.9 657.4,393.6 648.6,478.1 473.3,351.2 471.0,308.3" fill="#9d9282"/>
<polygon points="791.6,277.7 838.3,237.4 807.4,285.7 813.5,285.7 799.8,291.8" fill="#80978f"/>
<polygon points="800.0,270.0 826.0,248.0 820.0,262.0 806.0,281.0" fill="#78b6c5"/>
<polygon points="838.3,237.4 915.2,171.1 895.6,248.1 800.0,336.7 807.4,285.7" fill="#a59b8b"/>
<polygon points="657.4,393.6 791.6,277.7 799.8,291.8 789.0,346.5 648.6,478.1" fill="#a59b8b"/>
<polygon points="799.8,291.8 813.5,285.7 818.9,290.3 810.5,326.8 789.0,346.8" fill="#d9edf3"/>
<path d="M803 300 L797 338 M808 294 L802 334 M813 292 L807 328" stroke="#f6fbfc" stroke-width="1.6" fill="none"/>
<polygon points="676.0,395.0 680.0,391.4 677.9,409.1 673.9,412.6" fill="#e6d3ad"/>
<polygon points="675.6,423.8 679.5,420.2 677.3,437.8 673.4,441.4" fill="#e6d3ad"/>
<polygon points="702.2,372.0 706.0,368.7 703.5,386.2 699.8,389.5" fill="#e6d3ad"/>
<polygon points="701.0,400.7 704.7,397.4 702.3,414.9 698.6,418.2" fill="#e6d3ad"/>
<polygon points="726.8,350.3 730.4,347.2 727.8,364.5 724.2,367.7" fill="#e6d3ad"/>
<polygon points="725.0,379.0 728.5,375.8 725.8,393.2 722.4,396.4" fill="#e6d3ad"/>
<polygon points="750.2,329.8 753.6,326.8 750.7,344.1 747.3,347.1" fill="#e6d3ad"/>
<polygon points="747.8,358.4 751.1,355.4 748.2,372.6 744.9,375.6" fill="#e6d3ad"/>
<polygon points="772.3,310.4 775.5,307.6 772.4,324.7 769.2,327.5" fill="#e6d3ad"/>
<polygon points="769.4,338.9 772.5,336.0 769.4,353.1 766.3,356.0" fill="#e6d3ad"/>
<polygon points="847.9,244.0 850.6,241.7 846.8,258.3 844.2,260.6" fill="#e6d3ad"/>
<polygon points="843.4,272.0 846.0,269.7 842.3,286.3 839.7,288.6" fill="#e6d3ad"/>
<polygon points="863.1,230.7 865.6,228.4 861.8,245.0 859.3,247.2" fill="#e6d3ad"/>
<polygon points="858.3,258.6 860.8,256.3 857.0,272.8 854.5,275.1" fill="#e6d3ad"/>
<polygon points="877.6,217.9 880.1,215.7 876.1,232.2 873.7,234.3" fill="#e6d3ad"/>
<polygon points="872.6,245.7 875.0,243.5 871.0,259.9 868.7,262.1" fill="#e6d3ad"/>
<polygon points="891.6,205.6 894.0,203.6 889.9,219.9 887.6,221.9" fill="#e6d3ad"/>
<polygon points="886.3,233.3 888.6,231.2 884.6,247.5 882.3,249.6" fill="#e6d3ad"/>
<polygon points="901.3,197.1 903.5,195.1 899.5,211.4 897.2,213.4" fill="#e6d3ad"/>
<polygon points="895.8,224.7 898.1,222.7 894.0,238.9 891.7,240.9" fill="#e6d3ad"/>
<polygon points="471.5,291.0 479.5,296.5 479.2,314.5 471.2,309.0" fill="#e8d5b2"/>
<polygon points="476.5,294.4 479.5,296.5 479.2,314.5 476.2,312.4" fill="#b9c9cc"/>
<polygon points="542.0,341.0 550.0,346.5 549.7,364.5 541.7,359.0" fill="#e8d5b2"/>
<polygon points="547.0,344.4 550.0,346.5 549.7,364.5 546.7,362.4" fill="#b9c9cc"/>
<polygon points="584.0,370.0 592.0,375.5 591.7,393.5 583.7,388.0" fill="#e8d5b2"/>
<polygon points="589.0,373.4 592.0,375.5 591.7,393.5 588.7,391.4" fill="#b9c9cc"/>
<polygon points="626.0,398.5 634.0,404.0 633.7,422.0 625.7,416.5" fill="#e8d5b2"/>
<polygon points="631.0,401.9 634.0,404.0 633.7,422.0 630.7,419.9" fill="#b9c9cc"/>
<polygon points="188.8,203.6 380.5,365.5 384.0,408.3 197.1,244.0" fill="#a19585"/>
<polygon points="380.5,365.5 471.0,308.3 473.3,351.2 384.0,408.3" fill="#9f9484"/>
<polygon points="165.0,314.0 243.0,278.0 320.0,355.0 228.0,413.0" fill="#c5ebf3" fill-opacity="0.62"/>
<polygon points="247.0,268.0 312.6,316.7 315.0,340.5 248.3,290.5" fill="#8c9e95"/>
<polygon points="172.0,340.0 188.0,332.0 200.0,352.0 184.0,360.0" fill="#e8eef0" fill-opacity="0.8"/>
<line x1="176.0" y1="352.0" x2="178.0" y2="366.0" stroke="#dfe6e8" stroke-width="1.5"/>
<line x1="185.0" y1="362.0" x2="187.0" y2="376.0" stroke="#dfe6e8" stroke-width="1.5"/>
<line x1="194.0" y1="372.0" x2="196.0" y2="386.0" stroke="#dfe6e8" stroke-width="1.5"/>
<line x1="203.0" y1="382.0" x2="205.0" y2="396.0" stroke="#dfe6e8" stroke-width="1.5"/>
<line x1="212.0" y1="392.0" x2="214.0" y2="406.0" stroke="#dfe6e8" stroke-width="1.5"/>
<line x1="221.0" y1="402.0" x2="223.0" y2="416.0" stroke="#dfe6e8" stroke-width="1.5"/>
<polygon points="396.0,383.0 401.0,380.0 401.5,391.0 396.5,394.0" fill="#e9d2ad"/>
<polygon points="412.0,372.0 417.0,369.0 417.5,380.0 412.5,383.0" fill="#e9d2ad"/>
<polygon points="449.0,342.0 454.0,339.0 454.5,350.0 449.5,353.0" fill="#e9d2ad"/>
<polygon points="241.0,263.0 245.0,266.0 245.5,276.0 241.5,273.0" fill="#d8b98f"/>
<polygon points="268.0,292.0 273.0,296.0 274.0,309.0 269.0,305.0" fill="#b9b084"/>
<polygon points="292.5,147.5 657.4,393.6 658.4,387.1 298.0,144.5" fill="#b19b88"/>
<line x1="657.4" y1="393.6" x2="791.6" y2="277.7" stroke="#b6a896" stroke-width="3"/>
<line x1="838.3" y1="237.4" x2="915.2" y2="171.1" stroke="#b6a896" stroke-width="3"/>
<line x1="292.5" y1="147.5" x2="560.5" y2="32.2" stroke="#8d998e" stroke-width="2.5"/>
<line x1="560.5" y1="32.2" x2="915.2" y2="171.1" stroke="#8d998e" stroke-width="2.5"/>
<line x1="188.8" y1="203.6" x2="380.5" y2="365.5" stroke="#b5a592" stroke-width="2.5"/>
<line x1="380.5" y1="365.5" x2="471.0" y2="308.3" stroke="#b5a592" stroke-width="2.5"/>
<line x1="160.0" y1="262.0" x2="203.0" y2="241.0" stroke="#1e8fff" stroke-width="3.5"/>
<polygon points="190.0,200.0 196.0,203.0 194.0,210.0 189.0,206.0" fill="#9adf3a"/>
</svg>
</div>
<div id="viewline" class="abs"></div>
<div id="iconbox" class="abs">
<svg class="abs" style="left:39px;top:19.500px" width="31.5" height="35.2" viewBox="0 0 34 38"><g fill="none" stroke="#0b1020" stroke-width="3.6" stroke-linecap="round" stroke-linejoin="round"><path d="M13.5 3.6 L17 2 L20.5 3.6"/><path d="M3 13.5 V9.5 L6.5 7.6"/><path d="M31 13.500 V9.5 L27.5 7.6"/><path d="M3 23.500 V27.5 L6.5 29.4"/><path d="M31 23.5 V27.5 L27.5 29.4"/><path d="M13 15 L17 17.2 L21 15 M17 17.200 V22.5"/><path d="M17 29.5 V35 M13.5 32.8 L17 35 L20.5 32.8"/></g></svg>
</div>

<div id="chart" class="abs">
<div id="ctitle" class="abs"><span style="letter-spacing:1.06px">Number </span>of <span style="letter-spacing:-.07px">Elements </span><span style="letter-spacing:-.17px">nach </span><span style="letter-spacing:.3px">Building Storey und Element Type</span></div>
<div class="grid" style="left:345px"></div>
<div class="grid" style="left:758.5px"></div>
<div class="bar" style="top:120px;width:759px"><i style="left:0;width:1px;background:#12239e"></i><i style="left:1px;width:74.6px;background:#d9b300"></i><i style="left:75.6px;width:330.8px;background:#d64550"></i><i style="left:406.4px;width:63.6px;background:#197278"></i><i style="left:470px;width:109.6px;background:#1aab40"></i><i style="left:579.6px;width:3.7px;background:#15c6f4"></i><i style="left:583.3px;width:170.9px;background:#4092ff"></i><i style="left:754.2px;width:4.1px;background:#be5dc9"></i></div>
<div class="bar" style="top:210.5px;width:759px"><i style="left:0;width:58.2px;background:#e66c37"></i><i style="left:58.2px;width:11.4px;background:#6b007b"></i><i style="left:69.6px;width:124.7px;background:#e044a7"></i><i style="left:194.3px;width:2.7px;background:#ffa058"></i><i style="left:197px;width:4.6px;background:#f472d0"></i><i style="left:201.6px;width:537.9px;background:#b5a1ff"></i><i style="left:739.5px;width:18.8px;background:#c4a200"></i></div>
<div class="bar" style="top:301px;width:759px"><i style="left:0;width:225px;background:#6b007b"></i><i style="left:225px;width:213px;background:#f472d0"></i><i style="left:438px;width:320.3px;background:#b5a1ff"></i></div>
<div class="bar" style="top:391.400px;width:759px"><i style="left:0;width:55.4px;background:#e66c37"></i><i style="left:55.4px;width:8.7px;background:#6b007b"></i><i style="left:64.1px;width:123.8px;background:#e044a7"></i><i style="left:187.9px;width:1.800px;background:#1aab40"></i><i style="left:189.7px;width:1.800px;background:#15c6f4"></i><i style="left:191.5px;width:4.1px;background:#f472d0"></i><i style="left:195.6px;width:516px;background:#b5a1ff"></i><i style="left:711.6px;width:46.7px;background:#c4a200"></i></div>
<div id="legtitle" class="abs">Element Type</div>
<div class="leg" style="top:129px"><b style="background:#118dff"></b><span style="left:29px;letter-spacing:.4px">(Leer)</span></div>
<div class="leg" style="top:192.200px"><b style="background:#12239e"></b><span style="letter-spacing:.1px">IFCBUILDING</span></div>
<div class="leg" style="top:255.400px"><b style="background:#e66c37"></b><span style="letter-spacing:-.6px">IFCCOVERING</span></div>
<div class="leg" style="top:318.600px"><b style="background:#6b007b"></b><span>IFCCURTAINWALL</span></div>
<div class="leg" style="top:381.800px"><b style="background:#e044a7"></b><span>IFCDOOR</span></div>
<div class="leg" style="top:445px"><b style="background:#744ec2"></b><span>IFCFLOWTERMINAL</span></div>
</div>

<div id="rtop" class="abs">
<div class="abs" style="left:209.500px;top:-35.5px;font-size:54px;color:#605e5c;line-height:54px;-webkit-text-stroke:1.2px #605e5c">0</div>
<div class="abs" style="left:255.500px;top:0;width:49.5px;height:18.7px;background:#118dff"></div>
</div>
<div id="rpanel" class="abs">
<div id="rhead" class="abs">Element Name</div>
<svg class="abs" style="left:30px;top:67px" width="24" height="13" viewBox="0 0 24 13"><path d="M0 12.500 L12 0 L24 12.5 Z" fill="#252423"/></svg>
<div id="rline" class="abs"></div>
<div class="row h" style="top:89.70px"><div class="pm"></div><div class="t" style="font-size:36.5px;letter-spacing:0;transform:scaleX(.84);transform-origin:0 50%;top:12px;left:57.5px">$</div></div>
<div class="row g" style="top:139.50px"><div class="pm"></div><div class="t" style="letter-spacing:1.40px">Pset_BuildingCommon</div></div>
<div class="row" style="top:189.30px"><div class="pm"></div><div class="t" style="letter-spacing:0.50px">PSet_Revit_Constraints</div></div>
<div class="row g" style="top:239.10px"><div class="pm"></div><div class="t" style="letter-spacing:0.56px">PSet_Revit_Dimensions</div></div>
<div class="row" style="top:288.90px"><div class="pm"></div><div class="t" style="letter-spacing:0.48px">PSet_Revit_Other</div></div>
<div class="row g" style="top:338.70px"><div class="pm"></div><div class="t" style="letter-spacing:0.21px">PSet_Revit_Phasing</div></div>
<div class="row" style="top:388.50px"><div class="pm"></div><div class="t" style="letter-spacing:0.44px">PSet_Revit_Structural</div></div>
<div class="row g" style="top:438.30px"><div class="pm"></div><div class="t" style="letter-spacing:0.15px">PSet_Revit_Type_Constr...</div></div>
<div class="row" style="top:488.10px"><div class="pm"></div><div class="t" style="letter-spacing:0.21px">PSet_Revit_Type_Graphics</div></div>
<div class="row g" style="top:537.90px"><div class="pm"></div><div class="t" style="letter-spacing:0.44px">PSet_Revit_Type_Identity...</div></div>
<div class="row" style="top:587.70px"><div class="pm"></div><div class="t" style="letter-spacing:0.38px">PSet_Revit_Type_Other</div></div>
<div class="row g" style="top:637.50px"><div class="pm"></div><div class="t" style="letter-spacing:1.24px">Pset_WallCommon</div></div>
<div class="row h" style="top:687.30px"><div class="pm"></div><div class="t">1A01</div></div>
<div class="row g" style="top:737.10px"><div class="pm"></div><div class="t" style="letter-spacing:0.50px">PSet_Revit_Constraints</div></div>
<div class="row" style="top:786.90px"><div class="pm"></div><div class="t" style="letter-spacing:0.56px">PSet_Revit_Dimensions</div></div>
<div class="row g" style="top:836.70px"><div class="pm"></div><div class="t" style="letter-spacing:0.76px">PSet_Revit_Identity Data</div></div>
<div class="row" style="top:886.50px"><div class="pm"></div><div class="t" style="letter-spacing:0.48px">PSet_Revit_Other</div></div>
<div class="row g" style="top:936.30px"><div class="pm"></div><div class="t" style="letter-spacing:0.21px">PSet_Revit_Phasing</div></div>
<div class="row" style="top:986.10px"><div class="pm"></div><div class="t" style="letter-spacing:0.90px">Pset_SpaceCommon</div></div>
<div class="row g h" style="top:1035.90px"><div class="pm"></div><div class="t">1A02</div></div>
<div class="row" style="top:1085.70px"><div class="pm"></div><div class="t" style="letter-spacing:0.50px">PSet_Revit_Constraints</div></div>
</div>

<div id="dlg" class="abs">
<div class="ti abs">Laden</div>
<svg class="abs" style="left:716px;top:9.5px" width="20" height="20" viewBox="0 0 20 20"><path d="M2 2 L18.600 18.6 M18.600 2 L2 18.6" stroke="#4a4a4a" stroke-width="1.3" fill="none"/></svg>
<svg class="abs" style="left:45px;top:108px" width="22" height="24" viewBox="0 0 22 24"><g fill="#217346"><rect x="7.300" y="3.3" width="2.7" height="2.7"/><rect x="3.500" y="8.8" width="2.7" height="2.7"/><rect x="3.5" y="14.300" width="2.7" height="2.7"/><rect x="8.300" y="18.2" width="2.7" height="2.7"/><rect x="13.800" y="18.2" width="2.7" height="2.7"/></g></svg>
<div class="l1 abs">IFC</div>
<div class="l2 abs">Daten werden geladen …</div>
<svg class="abs" style="left:44px;top:182px" width="26" height="24" viewBox="0 0 26 24"><path d="M3 12.800 L10.7 21.3 L22.3 4.700" stroke="#5b9f8b" stroke-width="3.3" fill="none"/></svg>
<div class="l3 abs">Abfrageparameter</div>
<div id="btn" class="abs">Abbrechen</div>
</div>
</body>
</html>
